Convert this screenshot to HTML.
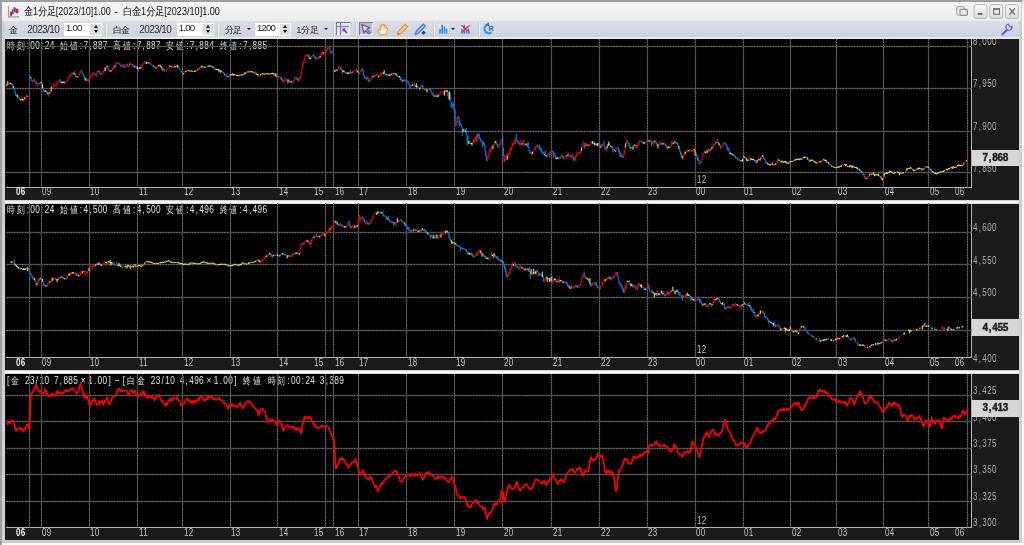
<!DOCTYPE html>
<html><head><meta charset="utf-8"><title>chart</title>
<style>
html,body{margin:0;padding:0;overflow:hidden}
body{width:1024px;height:545px;position:relative;overflow:hidden;background:#fff;font-family:"Liberation Sans",sans-serif}
.abs,.pan,.plot,.ax,.pb,.tl,.hd,.yl,#fr *,#tb *{position:absolute}
#fr{position:absolute;left:0;top:0;width:1024px;height:545px;background:#cfcfcf}
.pan{left:5px;width:1013.5px;background:#1b1b1b}
.plot{left:6px;width:965px;background:#000;border-right:1px solid #b4b4b4;border-bottom:1px solid #b4b4b4;box-sizing:content-box}
.ax{left:972px;width:46.5px;overflow:hidden}
.yl,.tl,.hd{font-family:"Liberation Sans",sans-serif;font-size:10px;line-height:10px;color:#b4b4b4;white-space:nowrap;transform-origin:0 0;transform:scaleX(.8);letter-spacing:.5px;filter:grayscale(1)}
.hd{font-size:10.6px;line-height:11px;transform:scaleX(.778);letter-spacing:.45px}
u{display:inline-block;width:.556em;text-align:center;text-decoration:none}
.yl{left:.6px}
.tl{color:#c2c2c2}
.tl.bd{font-weight:bold;color:#ececec}
.hd{left:6px;color:#e2e2e2}
.yl{color:#aaa}
.k{display:inline-block;font-weight:normal;text-align:center;overflow:hidden;vertical-align:top;height:10px;font-size:9.5px;letter-spacing:0}
.hd .k{width:12.23px;height:11px;font-size:10.4px;margin-right:.45px}
.pb{left:972px;width:46.5px;background:#d6d6d6;color:#1c1c1c;font-family:"Liberation Sans",sans-serif;font-weight:bold;font-size:10px;text-align:center;letter-spacing:-.3px;filter:grayscale(1);-webkit-text-stroke:.4px #1c1c1c}
.pb u{width:.45em}
svg{position:absolute;left:0;top:0}
#tb{position:absolute;left:0;top:0;width:1024px;height:40px}
.tt{filter:grayscale(1);font-size:10.5px;line-height:12px;color:#111;white-space:nowrap;transform-origin:0 0;transform:scaleX(.85)}
.tt .k{position:static!important;height:12px;font-size:10.5px}
.tc{filter:grayscale(1);font-size:9.4px;line-height:10px;height:10px;color:#1a1a1a;white-space:nowrap;overflow:hidden;text-align:center;letter-spacing:-.2px}
.tn{font-size:10px;line-height:10px;color:#2a2d36;white-space:nowrap;letter-spacing:-.62px;filter:grayscale(1)}
.spin{height:13.6px;background:#fff}
.spin i{left:2px;top:.5px;font-style:normal;font-size:9.6px;line-height:10px;color:#222;letter-spacing:-.8px;filter:grayscale(1)}
.spin s{right:.5px;top:1.2px;width:10.6px;height:11.4px;background:#dcdee3;text-decoration:none}
.spin s:before,.spin s:after{content:"";position:absolute;left:3.1px;border:2.3px solid transparent}
.spin s:before{top:-.4px;border-bottom:3px solid #111}
.spin s:after{top:6.6px;border-top:3px solid #111}
.sep{top:22.5px;width:1px;height:13px;background:#f1f2f5;box-shadow:-1px 0 0 #c3c7d0}
.dd{width:0;height:0;border:2.1px solid transparent;border-top:2.6px solid #111}

.g0{stroke:#3e3e3e;stroke-width:1.3;fill:none}
.g{stroke:#6a6a6a;stroke-width:1;stroke-dasharray:1.3 1.4;fill:none}
.cr{stroke:#e80000;stroke-width:1.1;fill:none}
.cb{stroke:#0a7ae6;stroke-width:1.1;fill:none}
.cy{stroke:#e6d85a;stroke-width:1.1;fill:none}
.sp{stroke:#f00;stroke-width:1.7;fill:none;stroke-linejoin:miter;stroke-miterlimit:3}
</style></head><body>
<div id="fr">
 <div style="left:0;top:0;width:1024px;height:2px;background:#9e9ea0"></div>
 <div style="left:0;top:0;width:2px;height:545px;background:#9e9ea0"></div>
 <div style="left:2px;top:2px;width:1019px;height:18.5px;background:linear-gradient(#f4f4f4,#ececec)"></div>
 <div style="left:1021.5px;top:0;width:2.5px;height:545px;background:linear-gradient(#d8d8d8,#fafafa 6px)"></div>
 <div style="left:2px;top:543px;width:1022px;height:2px;background:#fafafa"></div>
 <div style="left:5px;top:20.5px;width:1013.5px;height:16px;background:linear-gradient(#dadee7,#cdd2dd)"></div>
 <div style="left:5px;top:36.5px;width:1013.5px;height:2.5px;background:#e9e9ea"></div>
 <div style="left:5px;top:199.5px;width:1013.5px;height:4px;background:linear-gradient(#bdbdbd,#fff 45%,#fff 60%,#c9c9c9)"></div>
 <div style="left:5px;top:370px;width:1013.5px;height:4px;background:linear-gradient(#bdbdbd,#fff 45%,#fff 60%,#c9c9c9)"></div>
</div>
<div class="pan" style="top:39px;height:160.5px"></div>
<div class="plot" style="top:39px;height:147.5px"></div>
<div class="pan" style="top:203.5px;height:166.5px"></div>
<div class="plot" style="top:203.5px;height:153.5px"></div>
<div class="pan" style="top:374px;height:166px"></div>
<div class="plot" style="top:374px;height:153.2px"></div>
<div class="ax" style="top:39px;height:160.5px">
<span class="yl" style="top:-2.2px">8<u>,</u>000</span>
<span class="yl" style="top:40.3px">7<u>,</u>950</span>
<span class="yl" style="top:82.7px">7<u>,</u>900</span>
<span class="yl" style="top:124.5px">7<u>,</u>850</span>
</div>
<div class="pb" style="top:150.4px;height:15.9px;line-height:15.9px">7<u>,</u>868</div>
<span class="tl bd" style="left:16.2px;top:187.1px">06</span>
<span class="tl" style="left:41.9px;top:187.1px">09</span>
<span class="tl" style="left:90.3px;top:187.1px">10</span>
<span class="tl" style="left:138.8px;top:187.1px">11</span>
<span class="tl" style="left:183.8px;top:187.1px">12</span>
<span class="tl" style="left:231.3px;top:187.1px">13</span>
<span class="tl" style="left:278.5px;top:187.1px">14</span>
<span class="tl" style="left:314.1px;top:187.1px">15</span>
<span class="tl" style="left:335.3px;top:187.1px">16</span>
<span class="tl" style="left:359.4px;top:187.1px">17</span>
<span class="tl" style="left:408px;top:187.1px">18</span>
<span class="tl" style="left:455.8px;top:187.1px">19</span>
<span class="tl" style="left:503.6px;top:187.1px">20</span>
<span class="tl" style="left:552.5px;top:187.1px">21</span>
<span class="tl" style="left:600.6px;top:187.1px">22</span>
<span class="tl" style="left:648.4px;top:187.1px">23</span>
<span class="tl" style="left:696.3px;top:187.1px">00</span>
<span class="tl" style="left:744.3px;top:187.1px">01</span>
<span class="tl" style="left:792.1px;top:187.1px">02</span>
<span class="tl" style="left:837.7px;top:187.1px">03</span>
<span class="tl" style="left:884.7px;top:187.1px">04</span>
<span class="tl" style="left:929.8px;top:187.1px">05</span>
<span class="tl" style="left:954.7px;top:187.1px">06</span>
<span class="tl" style="left:696.6px;top:174.9px">12</span>
<div class="hd" style="top:39.9px"><b class="k">時</b><b class="k">刻</b><u>:</u>00<u>:</u>24<u>&nbsp;</u><b class="k">始</b><b class="k">値</b><u>:</u>7<u>,</u>887<u>&nbsp;</u><b class="k">高</b><b class="k">値</b><u>:</u>7<u>,</u>887<u>&nbsp;</u><b class="k">安</b><b class="k">値</b><u>:</u>7<u>,</u>884<u>&nbsp;</u><b class="k">終</b><b class="k">値</b><u>:</u>7<u>,</u>885</div>
<div class="ax" style="top:203.5px;height:166.5px">
<span class="yl" style="top:19.4px">4<u>,</u>600</span>
<span class="yl" style="top:52px">4<u>,</u>550</span>
<span class="yl" style="top:84.8px">4<u>,</u>500</span>
<span class="yl" style="top:150.3px">4<u>,</u>400</span>
</div>
<div class="pb" style="top:319.3px;height:17px;line-height:17px">4<u>,</u>455</div>
<span class="tl bd" style="left:16.2px;top:357.6px">06</span>
<span class="tl" style="left:41.9px;top:357.6px">09</span>
<span class="tl" style="left:90.3px;top:357.6px">10</span>
<span class="tl" style="left:138.8px;top:357.6px">11</span>
<span class="tl" style="left:183.8px;top:357.6px">12</span>
<span class="tl" style="left:231.3px;top:357.6px">13</span>
<span class="tl" style="left:278.5px;top:357.6px">14</span>
<span class="tl" style="left:314.1px;top:357.6px">15</span>
<span class="tl" style="left:335.3px;top:357.6px">16</span>
<span class="tl" style="left:359.4px;top:357.6px">17</span>
<span class="tl" style="left:408px;top:357.6px">18</span>
<span class="tl" style="left:455.8px;top:357.6px">19</span>
<span class="tl" style="left:503.6px;top:357.6px">20</span>
<span class="tl" style="left:552.5px;top:357.6px">21</span>
<span class="tl" style="left:600.6px;top:357.6px">22</span>
<span class="tl" style="left:648.4px;top:357.6px">23</span>
<span class="tl" style="left:696.3px;top:357.6px">00</span>
<span class="tl" style="left:744.3px;top:357.6px">01</span>
<span class="tl" style="left:792.1px;top:357.6px">02</span>
<span class="tl" style="left:837.7px;top:357.6px">03</span>
<span class="tl" style="left:884.7px;top:357.6px">04</span>
<span class="tl" style="left:929.8px;top:357.6px">05</span>
<span class="tl" style="left:954.7px;top:357.6px">06</span>
<span class="tl" style="left:696.6px;top:345.4px">12</span>
<div class="hd" style="top:204.4px"><b class="k">時</b><b class="k">刻</b><u>:</u>00<u>:</u>24<u>&nbsp;</u><b class="k">始</b><b class="k">値</b><u>:</u>4<u>,</u>500<u>&nbsp;</u><b class="k">高</b><b class="k">値</b><u>:</u>4<u>,</u>500<u>&nbsp;</u><b class="k">安</b><b class="k">値</b><u>:</u>4<u>,</u>496<u>&nbsp;</u><b class="k">終</b><b class="k">値</b><u>:</u>4<u>,</u>496</div>
<div class="ax" style="top:374px;height:166px">
<span class="yl" style="top:12.3px">3<u>,</u>425</span>
<span class="yl" style="top:38.5px">3<u>,</u>400</span>
<span class="yl" style="top:64.9px">3<u>,</u>375</span>
<span class="yl" style="top:91.3px">3<u>,</u>350</span>
<span class="yl" style="top:117.8px">3<u>,</u>325</span>
<span class="yl" style="top:144px">3<u>,</u>300</span>
</div>
<div class="pb" style="top:400.2px;height:16.8px;line-height:16.8px">3<u>,</u>413</div>
<span class="tl bd" style="left:16.2px;top:527.8px">06</span>
<span class="tl" style="left:41.9px;top:527.8px">09</span>
<span class="tl" style="left:90.3px;top:527.8px">10</span>
<span class="tl" style="left:138.8px;top:527.8px">11</span>
<span class="tl" style="left:183.8px;top:527.8px">12</span>
<span class="tl" style="left:231.3px;top:527.8px">13</span>
<span class="tl" style="left:278.5px;top:527.8px">14</span>
<span class="tl" style="left:314.1px;top:527.8px">15</span>
<span class="tl" style="left:335.3px;top:527.8px">16</span>
<span class="tl" style="left:359.4px;top:527.8px">17</span>
<span class="tl" style="left:408px;top:527.8px">18</span>
<span class="tl" style="left:455.8px;top:527.8px">19</span>
<span class="tl" style="left:503.6px;top:527.8px">20</span>
<span class="tl" style="left:552.5px;top:527.8px">21</span>
<span class="tl" style="left:600.6px;top:527.8px">22</span>
<span class="tl" style="left:648.4px;top:527.8px">23</span>
<span class="tl" style="left:696.3px;top:527.8px">00</span>
<span class="tl" style="left:744.3px;top:527.8px">01</span>
<span class="tl" style="left:792.1px;top:527.8px">02</span>
<span class="tl" style="left:837.7px;top:527.8px">03</span>
<span class="tl" style="left:884.7px;top:527.8px">04</span>
<span class="tl" style="left:929.8px;top:527.8px">05</span>
<span class="tl" style="left:954.7px;top:527.8px">06</span>
<span class="tl" style="left:696.6px;top:515.6px">12</span>
<div class="hd" style="top:374.9px"><u>[</u><b class="k">金</b><u>&nbsp;</u>23<u>/</u>10<u>&nbsp;</u>7<u>,</u>885<b class="k">×</b>1<u>.</u>00<u>]</u><b class="k">−</b><u>[</u><b class="k">白</b><b class="k">金</b><u>&nbsp;</u>23<u>/</u>10<u>&nbsp;</u>4<u>,</u>496<b class="k">×</b>1<u>.</u>00<u>]</u><u>&nbsp;</u><b class="k">終</b><b class="k">値</b><u>&nbsp;</u><b class="k">時</b><b class="k">刻</b><u>:</u>00<u>:</u>24<u>&nbsp;</u>3<u>,</u>389</div>
<svg width="1024" height="545" viewBox="0 0 1024 545">
<path class="g0" d="M6 46.5H971.5"/><path class="g" d="M6 46.5H971.5"/>
<path class="g0" d="M6 88.5H971.5"/><path class="g" d="M6 88.5H971.5"/>
<path class="g0" d="M6 131.5H971.5"/><path class="g" d="M6 131.5H971.5"/>
<path class="g0" d="M6 172.5H971.5"/><path class="g" d="M6 172.5H971.5"/>
<path class="g0" d="M29.5 39V186.5"/><path class="g" d="M29.5 39V186.5"/>
<path class="g0" d="M41.5 39V186.5"/><path class="g" d="M41.5 39V186.5"/>
<path class="g0" d="M89.5 39V186.5"/><path class="g" d="M89.5 39V186.5"/>
<path class="g0" d="M137.5 39V186.5"/><path class="g" d="M137.5 39V186.5"/>
<path class="g0" d="M182.5 39V186.5"/><path class="g" d="M182.5 39V186.5"/>
<path class="g0" d="M230.5 39V186.5"/><path class="g" d="M230.5 39V186.5"/>
<path class="g0" d="M277.5 39V186.5"/><path class="g" d="M277.5 39V186.5"/>
<path class="g0" d="M325.5 39V186.5"/><path class="g" d="M325.5 39V186.5"/>
<path class="g0" d="M333.5 39V186.5"/><path class="g" d="M333.5 39V186.5"/>
<path class="g0" d="M358.5 39V186.5"/><path class="g" d="M358.5 39V186.5"/>
<path class="g0" d="M406.5 39V186.5"/><path class="g" d="M406.5 39V186.5"/>
<path class="g0" d="M454.5 39V186.5"/><path class="g" d="M454.5 39V186.5"/>
<path class="g0" d="M502.5 39V186.5"/><path class="g" d="M502.5 39V186.5"/>
<path class="g0" d="M551.5 39V186.5"/><path class="g" d="M551.5 39V186.5"/>
<path class="g0" d="M599.5 39V186.5"/><path class="g" d="M599.5 39V186.5"/>
<path class="g0" d="M647.5 39V186.5"/><path class="g" d="M647.5 39V186.5"/>
<path class="g0" d="M695.5 39V186.5"/><path class="g" d="M695.5 39V186.5"/>
<path class="g0" d="M743.5 39V186.5"/><path class="g" d="M743.5 39V186.5"/>
<path class="g0" d="M790.5 39V186.5"/><path class="g" d="M790.5 39V186.5"/>
<path class="g0" d="M836.5 39V186.5"/><path class="g" d="M836.5 39V186.5"/>
<path class="g0" d="M883.5 39V186.5"/><path class="g" d="M883.5 39V186.5"/>
<path class="g0" d="M928.5 39V186.5"/><path class="g" d="M928.5 39V186.5"/>
<path class="g0" d="M967.5 39V186.5"/><path class="g" d="M967.5 39V186.5"/>
<path class="g0" d="M6 232.5H971.5"/><path class="g" d="M6 232.5H971.5"/>
<path class="g0" d="M6 264.5H971.5"/><path class="g" d="M6 264.5H971.5"/>
<path class="g0" d="M6 297.5H971.5"/><path class="g" d="M6 297.5H971.5"/>
<path class="g0" d="M6 330.5H971.5"/><path class="g" d="M6 330.5H971.5"/>
<path class="g0" d="M29.5 203.5V357"/><path class="g" d="M29.5 203.5V357"/>
<path class="g0" d="M41.5 203.5V357"/><path class="g" d="M41.5 203.5V357"/>
<path class="g0" d="M89.5 203.5V357"/><path class="g" d="M89.5 203.5V357"/>
<path class="g0" d="M137.5 203.5V357"/><path class="g" d="M137.5 203.5V357"/>
<path class="g0" d="M182.5 203.5V357"/><path class="g" d="M182.5 203.5V357"/>
<path class="g0" d="M230.5 203.5V357"/><path class="g" d="M230.5 203.5V357"/>
<path class="g0" d="M277.5 203.5V357"/><path class="g" d="M277.5 203.5V357"/>
<path class="g0" d="M325.5 203.5V357"/><path class="g" d="M325.5 203.5V357"/>
<path class="g0" d="M333.5 203.5V357"/><path class="g" d="M333.5 203.5V357"/>
<path class="g0" d="M358.5 203.5V357"/><path class="g" d="M358.5 203.5V357"/>
<path class="g0" d="M406.5 203.5V357"/><path class="g" d="M406.5 203.5V357"/>
<path class="g0" d="M454.5 203.5V357"/><path class="g" d="M454.5 203.5V357"/>
<path class="g0" d="M502.5 203.5V357"/><path class="g" d="M502.5 203.5V357"/>
<path class="g0" d="M551.5 203.5V357"/><path class="g" d="M551.5 203.5V357"/>
<path class="g0" d="M599.5 203.5V357"/><path class="g" d="M599.5 203.5V357"/>
<path class="g0" d="M647.5 203.5V357"/><path class="g" d="M647.5 203.5V357"/>
<path class="g0" d="M695.5 203.5V357"/><path class="g" d="M695.5 203.5V357"/>
<path class="g0" d="M743.5 203.5V357"/><path class="g" d="M743.5 203.5V357"/>
<path class="g0" d="M790.5 203.5V357"/><path class="g" d="M790.5 203.5V357"/>
<path class="g0" d="M836.5 203.5V357"/><path class="g" d="M836.5 203.5V357"/>
<path class="g0" d="M883.5 203.5V357"/><path class="g" d="M883.5 203.5V357"/>
<path class="g0" d="M928.5 203.5V357"/><path class="g" d="M928.5 203.5V357"/>
<path class="g0" d="M967.5 203.5V357"/><path class="g" d="M967.5 203.5V357"/>
<path class="g0" d="M6 395.5H971.5"/><path class="g" d="M6 395.5H971.5"/>
<path class="g0" d="M6 421.5H971.5"/><path class="g" d="M6 421.5H971.5"/>
<path class="g0" d="M6 448.5H971.5"/><path class="g" d="M6 448.5H971.5"/>
<path class="g0" d="M6 474.5H971.5"/><path class="g" d="M6 474.5H971.5"/>
<path class="g0" d="M6 501.5H971.5"/><path class="g" d="M6 501.5H971.5"/>
<path class="g0" d="M29.5 374V527.2"/><path class="g" d="M29.5 374V527.2"/>
<path class="g0" d="M41.5 374V527.2"/><path class="g" d="M41.5 374V527.2"/>
<path class="g0" d="M89.5 374V527.2"/><path class="g" d="M89.5 374V527.2"/>
<path class="g0" d="M137.5 374V527.2"/><path class="g" d="M137.5 374V527.2"/>
<path class="g0" d="M182.5 374V527.2"/><path class="g" d="M182.5 374V527.2"/>
<path class="g0" d="M230.5 374V527.2"/><path class="g" d="M230.5 374V527.2"/>
<path class="g0" d="M277.5 374V527.2"/><path class="g" d="M277.5 374V527.2"/>
<path class="g0" d="M325.5 374V527.2"/><path class="g" d="M325.5 374V527.2"/>
<path class="g0" d="M333.5 374V527.2"/><path class="g" d="M333.5 374V527.2"/>
<path class="g0" d="M358.5 374V527.2"/><path class="g" d="M358.5 374V527.2"/>
<path class="g0" d="M406.5 374V527.2"/><path class="g" d="M406.5 374V527.2"/>
<path class="g0" d="M454.5 374V527.2"/><path class="g" d="M454.5 374V527.2"/>
<path class="g0" d="M502.5 374V527.2"/><path class="g" d="M502.5 374V527.2"/>
<path class="g0" d="M551.5 374V527.2"/><path class="g" d="M551.5 374V527.2"/>
<path class="g0" d="M599.5 374V527.2"/><path class="g" d="M599.5 374V527.2"/>
<path class="g0" d="M647.5 374V527.2"/><path class="g" d="M647.5 374V527.2"/>
<path class="g0" d="M695.5 374V527.2"/><path class="g" d="M695.5 374V527.2"/>
<path class="g0" d="M743.5 374V527.2"/><path class="g" d="M743.5 374V527.2"/>
<path class="g0" d="M790.5 374V527.2"/><path class="g" d="M790.5 374V527.2"/>
<path class="g0" d="M836.5 374V527.2"/><path class="g" d="M836.5 374V527.2"/>
<path class="g0" d="M883.5 374V527.2"/><path class="g" d="M883.5 374V527.2"/>
<path class="g0" d="M928.5 374V527.2"/><path class="g" d="M928.5 374V527.2"/>
<path class="g0" d="M967.5 374V527.2"/><path class="g" d="M967.5 374V527.2"/>
<path class="cb" d="M11.7 82.7V85.1M12.5 84.0V86.5M14.1 87.8V90.5M14.9 89.6V93.5M15.7 92.2V95.9M16.5 94.4V96.3M18.2 96.1V97.5M19.0 97.4V99.6M19.8 98.4V100.2M29.6 75.6V77.0M30.4 76.2V78.5M31.2 77.0V80.8M32.0 80.1V81.5M32.8 80.6V82.0M34.4 78.7V81.4M36.0 81.0V83.9M36.8 82.3V84.5M39.3 82.9V84.4M41.7 81.7V85.0M43.3 87.5V92.3M46.5 90.9V93.1M47.3 91.8V94.8M60.2 78.9V83.0M61.0 80.4V83.2M65.0 82.0V83.5M73.1 72.4V74.1M74.7 71.2V74.9M75.5 73.8V76.5M76.3 75.4V77.2M81.9 70.0V73.4M82.7 72.7V74.4M83.5 74.3V76.5M84.3 75.5V80.5M85.1 77.6V80.6M87.6 79.2V81.1M94.0 72.8V74.6M95.6 73.7V75.7M98.0 70.7V72.1M98.8 70.6V72.0M99.6 70.9V73.8M100.4 73.1V74.5M101.2 73.4V74.8M107.7 66.3V68.2M108.5 67.4V69.6M109.3 69.3V71.9M117.3 62.4V63.8M119.0 62.4V64.2M119.8 63.7V65.1M120.6 64.7V66.4M121.4 65.1V66.5M122.2 65.8V67.2M123.8 63.9V67.8M127.0 63.7V65.5M127.8 64.5V66.8M131.8 63.7V65.1M132.6 64.6V66.2M133.4 65.7V67.2M135.1 66.0V67.4M135.9 66.3V67.7M136.7 66.3V68.9M138.3 67.9V71.3M145.5 61.6V62.7M149.5 62.3V63.8M150.3 63.2V64.6M151.2 63.9V65.3M152.8 64.8V66.4M154.4 66.3V68.2M155.2 67.2V68.3M162.4 67.9V70.9M164.0 69.3V71.1M164.8 70.5V71.7M172.1 66.3V68.0M178.5 66.5V68.0M179.3 67.5V68.6M180.1 68.2V69.8M180.9 69.5V71.5M181.7 70.9V72.7M182.5 72.5V74.3M189.0 70.2V71.4M202.7 65.7V67.1M203.5 66.3V67.4M205.9 66.6V67.7M206.7 66.4V67.5M213.9 66.8V68.7M214.7 68.2V69.8M219.6 69.5V71.2M222.0 71.0V72.5M222.8 71.6V72.8M223.6 72.1V73.6M224.4 73.0V76.0M225.2 73.5V74.6M226.0 73.7V76.0M226.8 75.3V76.8M228.4 76.1V77.4M246.1 72.3V73.4M253.4 71.8V72.9M255.8 71.2V74.4M259.0 75.2V76.8M274.3 73.5V74.8M277.5 76.0V77.7M279.1 76.2V77.6M280.0 76.1V77.5M280.8 76.9V78.9M281.6 77.5V80.2M282.4 79.0V81.2M283.2 80.4V82.5M287.2 78.9V80.6M288.8 78.8V81.3M289.6 80.5V81.9M290.4 81.1V82.6M296.1 76.9V78.3M296.9 77.2V80.2M297.7 78.4V80.5M298.5 78.8V81.4M307.3 54.4V55.9M308.1 55.5V57.3M308.9 54.2V58.6M313.0 54.8V56.8M313.8 54.1V56.5M314.6 56.3V57.7M315.4 56.7V59.6M316.2 57.2V58.6M317.0 58.0V59.4M329.1 46.7V48.2M329.9 47.9V51.3M330.7 50.7V53.1M331.5 52.1V53.5M333.1 49.6V53.8M334.3 70.6V72.0M340.0 66.3V68.3M340.8 67.6V69.9M341.6 69.1V70.5M342.4 69.6V73.9M344.8 71.4V72.8M345.6 72.1V73.5M350.4 70.3V73.8M356.1 69.2V70.8M356.9 69.3V72.4M358.5 72.0V73.5M362.5 68.4V71.0M363.3 70.0V75.5M364.1 74.5V77.7M364.9 76.3V78.6M365.7 77.4V79.3M367.3 76.7V78.6M368.1 77.3V81.6M369.0 79.8V82.2M374.6 75.1V76.6M376.2 74.0V75.4M377.8 74.7V76.4M382.6 72.5V73.9M385.1 73.0V74.5M386.7 73.7V75.6M387.5 74.3V75.7M388.3 74.0V75.8M395.5 73.1V74.8M397.1 74.3V76.0M397.9 75.3V77.3M398.7 75.9V77.4M400.3 76.7V80.6M401.2 78.1V80.2M402.0 79.4V82.4M404.4 79.2V80.9M405.2 79.8V81.2M406.0 79.5V81.6M406.8 80.3V81.7M407.6 81.3V82.8M408.4 81.4V83.3M409.2 82.8V85.5M410.0 84.7V88.1M410.8 85.3V86.7M414.0 83.5V85.5M414.8 84.4V85.8M415.6 84.8V87.2M417.3 85.2V88.5M418.9 87.1V88.8M422.1 84.9V87.0M422.9 85.4V89.1M423.7 88.2V89.6M424.5 88.7V90.1M425.3 89.1V90.5M429.3 88.5V90.0M430.1 88.8V90.5M430.9 89.6V92.3M431.7 91.5V93.9M432.5 92.7V95.3M433.4 94.0V95.8M434.2 95.0V96.4M435.8 94.7V96.7M447.8 90.3V96.8M448.6 92.1V99.7M450.3 93.4V101.5M451.1 100.8V108.0M451.9 102.8V105.2M452.7 104.6V107.6M453.5 102.3V108.9M454.3 108.0V110.7M455.1 109.5V118.7M455.9 117.2V126.3M458.3 116.2V117.6M459.1 117.1V126.5M459.9 120.6V124.7M460.7 123.0V125.1M461.5 124.5V127.3M462.3 126.6V135.9M463.9 128.6V130.5M464.7 129.3V132.6M466.4 128.2V135.2M467.2 134.5V145.7M468.0 135.9V142.0M469.6 141.3V143.2M470.4 142.9V144.3M473.6 139.3V142.4M477.6 133.5V139.7M478.4 134.5V136.5M479.2 133.3V138.5M480.0 137.4V140.1M480.8 138.6V141.4M481.7 140.4V142.6M482.5 141.2V147.1M483.3 141.5V144.5M484.1 142.7V146.1M484.9 144.6V150.7M485.7 150.3V156.7M486.5 155.4V160.9M496.1 140.9V143.1M496.9 142.5V145.3M497.8 143.7V147.5M498.6 146.1V147.6M501.8 139.4V141.2M502.6 135.7V149.0M503.4 147.6V156.1M504.2 155.2V161.9M516.3 134.3V140.0M517.1 139.2V141.8M517.9 140.4V142.5M518.7 140.9V143.8M519.5 142.4V145.2M524.3 143.6V145.7M526.7 144.0V146.0M527.5 142.7V146.7M528.3 141.8V148.1M529.1 146.8V151.1M530.0 150.4V153.2M530.8 152.1V154.3M537.2 144.8V147.5M538.0 146.3V147.7M538.8 147.4V148.8M539.6 144.7V149.0M540.4 147.8V150.2M541.2 148.0V151.5M542.0 150.1V153.5M542.8 151.5V153.6M543.6 152.4V154.2M545.2 150.3V156.6M546.9 155.0V157.1M549.3 152.7V156.7M551.7 150.6V152.5M553.3 150.9V156.9M554.1 152.8V154.2M554.9 153.6V156.5M555.7 155.4V158.9M558.1 157.5V158.9M558.9 157.7V159.6M560.5 157.1V158.5M562.2 154.8V157.2M563.0 156.0V158.0M563.8 157.5V158.9M568.6 152.7V156.2M571.8 154.1V156.6M572.6 156.0V157.4M573.4 156.9V161.3M574.2 158.8V160.2M579.9 151.9V153.6M584.7 143.0V148.4M585.5 142.2V146.6M588.7 144.0V146.1M593.5 142.0V144.1M595.2 143.5V145.3M596.8 143.6V145.2M598.4 143.3V144.7M599.2 141.6V145.5M600.0 143.8V147.1M604.0 141.1V146.8M604.8 145.4V149.6M605.6 148.1V149.5M609.6 143.3V145.6M610.5 145.2V147.1M612.1 146.1V148.5M612.9 147.6V152.4M613.7 149.0V150.4M614.5 149.1V151.1M617.7 147.4V148.8M618.5 147.2V151.5M619.3 150.6V153.5M620.1 151.8V157.3M620.9 152.9V156.7M621.7 155.2V156.6M622.5 155.5V158.3M627.4 140.6V142.6M628.2 142.3V143.8M629.0 142.8V146.2M629.8 144.7V147.8M632.2 147.7V149.3M635.4 145.1V146.5M636.2 145.1V148.2M641.0 140.8V142.5M641.8 140.5V142.5M642.7 141.8V143.2M647.5 140.8V142.2M649.9 139.9V141.8M651.5 140.6V145.9M652.3 141.9V143.8M653.1 140.2V143.8M656.3 141.6V144.3M657.1 142.9V145.9M658.8 144.4V145.8M661.2 143.0V144.9M662.0 142.7V144.5M663.6 143.1V144.5M665.2 143.2V145.5M666.0 144.4V146.7M666.8 145.4V148.6M675.7 141.9V143.4M676.5 142.4V144.0M677.3 142.3V144.7M678.1 143.2V147.1M679.7 148.0V151.8M680.5 151.3V154.9M681.3 153.0V156.9M682.9 157.0V160.2M690.1 149.9V151.3M691.8 149.3V151.3M695.8 151.8V154.7M696.6 153.8V157.0M697.4 156.4V160.6M698.2 157.4V161.1M699.0 160.1V164.3M700.6 161.8V163.2M708.7 148.6V151.9M714.3 143.7V145.1M718.3 141.5V144.3M719.9 144.5V145.9M720.7 145.4V148.4M724.8 142.3V144.6M725.6 143.2V144.6M726.4 144.2V146.4M727.2 145.4V150.4M728.0 147.5V149.5M728.8 148.4V151.6M729.6 151.2V154.8M732.0 153.0V154.6M733.6 153.9V156.2M735.2 155.1V157.9M736.0 156.8V158.3M736.8 157.7V159.1M737.6 158.1V160.0M738.4 159.1V160.5M739.3 159.7V161.2M741.7 160.2V161.6M744.9 156.5V158.1M745.7 157.0V159.5M750.5 157.5V161.0M754.5 160.0V161.5M755.4 159.4V162.6M763.4 155.6V159.1M764.2 158.1V160.0M765.0 158.7V161.0M765.8 160.6V163.8M766.6 161.8V163.2M768.2 163.2V164.6M773.1 163.9V165.3M773.9 164.1V165.7M779.5 160.0V161.7M780.3 160.7V162.4M782.7 161.0V163.6M787.6 162.2V163.8M806.1 156.5V158.0M808.5 159.4V160.8M813.3 160.0V161.6M818.9 161.7V162.8M827.0 161.8V162.9M829.4 162.8V164.9M830.2 164.2V165.3M831.0 164.3V166.2M832.6 166.0V167.1M835.0 166.8V167.9M847.1 164.4V167.1M858.4 168.6V170.0M860.8 170.4V171.8M862.4 171.6V172.8M863.2 172.4V175.0M864.0 174.1V176.8M864.8 176.0V178.4M879.3 175.4V176.8M880.1 175.8V177.5M901.9 172.3V173.7M911.5 167.5V169.4M912.3 168.5V169.7M920.4 167.9V169.0M922.0 168.1V169.4M926.8 165.9V167.5M929.2 167.2V168.7M930.0 168.1V170.0M931.6 169.9V171.8"/>
<path class="cr" d="M8.5 82.9V84.7M9.3 83.2V84.6M21.4 97.7V100.4M23.8 97.2V99.7M25.4 97.1V101.1M26.2 96.0V97.5M27.8 95.5V96.9M33.6 79.3V81.8M35.2 80.4V82.1M37.6 82.9V86.9M38.5 83.2V84.6M40.1 82.1V83.8M44.1 90.9V92.4M48.9 92.7V96.8M50.5 90.1V93.3M52.1 86.0V87.4M52.9 86.0V87.4M53.7 82.5V86.4M54.6 85.0V86.4M55.4 84.2V85.6M56.2 83.8V87.0M57.0 81.8V85.2M57.8 81.1V82.8M58.6 80.3V81.7M59.4 79.1V80.7M65.8 82.4V83.8M66.6 80.7V82.6M67.4 79.4V81.1M68.2 77.2V80.1M69.0 76.0V78.0M69.8 74.8V76.4M70.7 73.8V77.6M71.5 73.1V75.0M72.3 71.9V73.9M77.9 76.2V77.6M78.7 74.5V76.8M79.5 72.5V75.0M80.3 70.7V73.5M81.1 70.0V71.4M86.8 79.7V81.1M88.4 79.3V82.4M89.2 78.2V79.8M90.0 76.9V78.7M90.8 75.4V77.5M91.6 74.9V76.3M92.4 73.5V76.0M93.2 72.3V74.6M94.8 73.5V74.9M96.4 73.2V76.4M97.2 71.3V74.3M102.0 73.3V74.7M102.9 70.4V74.1M103.7 70.4V72.5M104.5 67.8V71.5M106.1 66.4V68.7M110.1 70.3V71.7M111.7 69.6V71.0M112.5 67.8V70.6M113.3 67.1V69.5M114.1 66.7V68.1M115.7 62.2V66.3M116.5 62.4V64.4M118.1 62.5V64.2M123.0 66.0V67.4M124.6 66.0V67.9M125.4 64.7V68.0M126.2 63.9V65.7M128.6 65.8V67.2M129.4 62.5V66.3M130.2 63.6V65.7M131.0 62.9V64.3M139.1 67.8V69.6M141.5 65.7V67.6M142.3 64.4V66.8M143.1 63.5V65.2M143.9 62.4V63.9M144.7 61.2V63.0M152.0 64.7V65.8M156.8 66.0V68.3M157.6 65.8V67.8M159.2 64.4V65.8M165.6 70.5V71.6M166.4 69.9V71.5M167.3 68.4V70.2M168.1 67.6V69.2M168.9 65.5V67.7M172.9 66.3V68.2M173.7 66.5V67.6M176.1 65.6V67.0M184.2 70.7V74.0M185.0 71.2V72.4M186.6 70.6V71.9M187.4 70.2V71.3M193.0 70.8V71.9M193.8 70.9V72.0M196.2 70.2V71.5M197.0 69.4V70.7M198.6 67.0V70.0M199.5 67.8V68.9M200.3 66.8V68.6M207.5 66.0V67.1M211.5 66.1V67.2M229.2 75.3V77.0M235.7 74.8V75.9M238.9 75.2V77.2M240.5 74.5V76.0M243.7 73.4V74.8M246.9 71.8V72.9M249.4 70.0V72.6M251.8 71.0V72.6M255.0 72.4V73.5M259.8 74.7V76.2M261.4 73.8V74.9M265.5 73.5V74.6M276.7 75.5V78.4M278.3 76.0V77.4M284.0 80.8V82.6M284.8 77.4V81.6M285.6 79.6V81.0M286.4 78.5V80.5M292.0 81.2V82.6M292.8 81.4V83.1M293.6 80.0V82.4M294.4 76.4V80.7M295.2 77.3V79.4M299.3 78.0V81.1M300.1 76.1V79.3M300.9 73.1V78.3M301.7 68.3V74.0M302.5 62.3V69.4M303.3 62.0V64.8M304.1 59.2V63.0M304.9 56.3V60.4M305.7 54.3V57.6M306.5 53.9V55.3M311.3 56.0V58.5M312.2 55.2V56.8M317.8 57.6V59.1M318.6 56.8V59.2M319.4 56.3V57.9M321.0 53.8V56.7M321.8 51.7V55.1M322.6 52.7V54.4M324.2 52.2V53.6M325.0 51.8V53.5M325.8 50.7V53.6M326.6 49.2V51.1M327.4 48.3V50.0M328.3 46.4V49.0M332.3 49.7V52.6M335.9 70.2V71.6M337.6 68.7V71.0M338.4 65.8V69.2M339.2 65.7V69.3M346.4 72.7V74.1M349.6 72.5V73.9M351.2 72.7V74.1M352.9 70.9V72.8M353.7 70.2V71.8M354.5 69.9V71.3M355.3 69.2V70.6M359.3 72.2V74.2M360.1 70.6V72.8M360.9 69.3V71.4M361.7 68.2V70.1M366.5 77.1V79.9M369.8 80.5V82.2M370.6 79.1V81.0M371.4 77.6V79.3M372.2 76.1V78.7M373.8 75.8V77.2M375.4 74.8V76.2M377.0 74.1V75.5M379.4 75.1V76.5M380.2 73.1V76.4M381.0 73.3V74.7M381.8 72.6V75.8M390.7 73.8V75.8M392.3 73.1V74.6M393.1 72.5V74.3M394.7 72.8V74.2M403.6 79.5V81.3M411.6 85.0V86.4M413.2 83.0V85.8M418.1 86.9V88.5M420.5 86.3V89.0M421.3 85.2V87.4M426.1 89.0V90.6M427.7 89.0V91.5M428.5 88.3V89.7M436.6 93.7V97.1M439.0 93.7V95.1M439.8 93.1V94.5M440.6 92.2V93.7M441.4 91.9V93.3M442.2 91.7V93.1M443.0 91.0V92.5M443.8 90.7V95.3M445.4 90.5V92.3M456.7 121.1V126.3M457.5 116.1V122.8M472.8 141.5V143.4M474.4 139.6V142.4M475.2 136.9V141.3M476.0 135.5V142.1M476.8 133.5V141.6M487.3 157.5V161.4M488.1 155.3V159.2M488.9 152.9V156.8M489.7 149.0V153.8M490.5 149.7V152.0M491.3 147.4V151.0M492.1 145.7V148.5M493.7 143.9V146.6M494.5 142.6V145.1M499.4 143.6V147.6M500.2 142.6V145.2M501.0 139.0V143.6M505.0 155.4V161.8M505.8 158.5V160.2M506.6 153.6V159.0M508.2 153.5V157.2M509.0 151.7V154.7M509.8 149.6V155.7M510.6 147.7V150.7M511.4 146.4V150.7M512.2 143.0V147.6M513.0 143.0V145.5M513.9 140.9V144.7M514.7 140.1V142.5M515.5 137.6V144.6M520.3 139.7V145.2M521.1 143.9V145.3M522.7 140.2V144.8M523.5 139.7V145.2M525.1 143.2V144.9M531.6 153.0V156.0M533.2 150.6V153.4M534.0 149.3V151.2M534.8 148.1V150.3M535.6 146.4V149.7M536.4 145.2V147.5M547.7 153.4V156.2M548.5 152.8V154.4M550.1 152.1V155.2M550.9 151.0V153.0M552.5 150.5V152.7M559.7 157.1V158.9M561.3 155.0V157.9M564.6 157.0V159.5M565.4 156.3V158.0M566.2 154.9V157.2M567.8 152.5V156.0M569.4 154.9V157.9M570.2 154.2V156.4M571.0 154.9V158.2M575.0 155.6V159.8M575.8 156.0V161.7M576.6 153.8V156.6M577.4 151.9V154.7M578.3 152.9V154.3M579.1 152.6V154.1M580.7 150.3V154.3M582.3 146.2V148.6M583.1 140.7V147.1M583.9 143.2V144.8M586.3 144.6V146.0M587.9 143.5V145.6M589.5 144.1V146.1M590.3 143.5V144.9M591.1 141.8V144.1M591.9 141.0V143.4M601.6 143.9V147.5M602.4 144.3V146.3M603.2 143.1V145.0M606.4 147.8V151.9M616.1 148.6V151.7M616.9 147.4V149.2M623.3 154.2V158.0M624.1 150.5V155.9M624.9 146.8V153.5M626.6 138.8V143.9M631.4 147.2V148.6M633.8 145.2V148.0M637.0 145.3V148.1M637.8 143.4V146.7M638.6 142.4V144.9M639.4 140.7V142.9M640.2 140.4V141.8M645.1 141.9V143.4M645.9 141.1V143.0M646.7 140.6V142.5M648.3 140.6V142.0M650.7 140.6V142.0M653.9 140.7V145.7M655.5 141.0V142.4M659.6 142.2V145.6M660.4 141.3V144.7M664.4 143.1V145.3M670.0 146.4V147.8M670.8 145.7V147.1M671.6 141.0V146.3M672.4 143.3V144.7M674.0 141.6V144.1M683.7 153.9V158.8M684.5 152.2V155.1M686.1 151.1V152.9M686.9 150.4V151.8M687.7 150.1V151.9M689.3 149.7V151.6M691.0 149.6V151.5M692.6 149.9V151.8M693.4 149.5V152.0M699.8 162.4V164.6M701.4 159.6V162.6M702.2 156.2V160.3M703.0 153.3V156.8M703.8 152.6V154.0M704.6 150.6V153.7M706.2 151.4V152.9M707.9 149.8V152.4M709.5 149.8V151.3M711.1 147.9V150.5M712.7 145.8V147.7M713.5 144.1V147.2M715.1 141.8V144.4M715.9 142.0V144.2M717.5 139.6V142.6M721.5 146.5V148.4M722.3 145.3V146.9M723.2 143.5V145.4M724.0 142.0V144.7M734.4 155.4V156.8M740.1 160.2V161.6M743.3 157.9V160.6M748.9 158.7V160.5M749.7 155.8V159.4M756.2 161.0V162.5M757.8 159.9V161.6M759.4 158.8V160.3M761.0 156.8V158.5M761.8 155.6V158.2M771.5 163.7V165.5M774.7 164.1V165.7M776.3 162.4V164.4M777.1 160.9V162.9M777.9 159.3V163.7M789.2 161.9V163.3M793.2 160.4V161.5M802.8 157.7V158.8M809.3 159.6V160.7M817.3 162.3V163.4M818.1 162.0V163.4M821.4 160.5V162.3M822.2 160.3V161.4M823.0 159.8V160.9M837.5 166.9V168.5M842.3 164.6V166.2M843.1 164.7V165.8M843.9 164.1V165.8M848.7 166.1V167.2M865.6 177.6V179.2M867.2 177.6V179.0M868.1 176.1V177.9M868.9 174.2V176.5M870.5 173.5V174.6M872.9 173.4V174.5M883.3 175.0V180.2M893.0 172.5V173.6M896.2 170.8V172.3M897.0 171.0V172.1M904.3 172.0V173.1M905.1 171.1V172.8M905.9 169.4V171.8M915.5 169.4V170.5M917.2 168.0V169.4M924.4 167.4V169.4M925.2 166.9V168.3M945.3 169.4V170.8M950.2 167.7V169.1M956.6 165.7V167.5M963.0 164.1V165.9M964.7 161.9V164.0M965.5 160.8V162.1M967.1 158.9V160.5"/>
<path class="cy" d="M6.9 84.1V86.3M7.7 81.3V84.3M10.1 82.8V84.2M10.9 82.7V84.1M13.3 85.6V88.2M17.3 94.5V97.4M20.6 99.0V100.4M22.2 98.9V100.3M23.0 99.0V100.7M24.6 97.6V99.0M27.0 95.4V96.8M40.9 81.9V83.3M42.5 84.2V88.1M44.9 90.5V91.9M45.7 90.2V91.7M48.1 92.5V94.3M49.7 92.2V93.6M51.3 87.1V91.1M61.8 81.8V83.4M62.6 81.7V83.1M63.4 81.5V83.1M64.2 81.6V83.0M73.9 72.9V74.5M77.1 76.1V77.5M85.9 77.7V80.8M105.3 67.5V71.1M106.9 65.8V67.2M110.9 69.9V71.8M114.9 65.5V67.5M134.2 65.8V67.2M137.5 66.5V68.9M139.9 67.0V68.9M140.7 66.9V68.0M146.3 62.1V64.0M147.1 62.2V63.3M147.9 62.5V63.6M148.7 62.4V63.5M153.6 65.6V66.7M156.0 67.6V68.7M158.4 65.1V66.3M160.0 64.4V66.4M160.8 65.8V66.9M161.6 66.4V68.4M163.2 68.8V69.9M169.7 65.5V66.8M170.5 65.5V66.7M171.3 65.7V66.8M174.5 66.1V67.2M175.3 66.2V67.5M176.9 65.6V66.7M177.7 65.1V67.6M183.4 73.3V74.4M185.8 70.9V72.0M188.2 70.0V71.1M189.8 70.5V71.6M190.6 70.4V71.5M191.4 70.4V71.5M192.2 70.8V71.9M194.6 70.8V71.9M195.4 70.6V71.7M197.8 69.1V70.3M201.1 66.5V67.6M201.9 65.5V67.4M204.3 66.8V67.9M205.1 66.7V67.8M208.3 65.5V66.8M209.1 65.2V66.3M209.9 65.4V66.8M210.7 65.6V66.7M212.3 66.2V67.3M213.1 66.6V67.7M215.6 68.7V69.8M216.4 68.9V70.0M217.2 69.2V70.3M218.0 68.7V69.9M218.8 69.0V71.7M220.4 70.3V72.7M221.2 70.6V71.7M227.6 75.9V77.1M230.0 74.4V75.5M230.8 74.3V75.6M231.7 74.1V75.3M232.5 73.3V74.9M233.3 74.0V75.7M234.1 74.0V75.1M234.9 74.2V75.5M236.5 75.1V76.2M237.3 75.0V76.1M238.1 74.9V76.0M239.7 75.0V76.1M241.3 74.3V75.4M242.1 74.5V75.6M242.9 74.2V75.3M244.5 72.8V74.4M245.3 72.3V73.7M247.8 71.3V72.4M248.6 71.4V72.5M250.2 71.1V72.2M251.0 71.2V72.3M252.6 71.3V72.4M254.2 72.3V73.4M256.6 73.6V74.8M257.4 74.0V75.1M258.2 74.3V75.4M260.6 74.3V75.4M262.2 73.1V74.2M263.0 73.5V74.6M263.9 73.2V74.4M264.7 73.4V74.5M266.3 73.4V74.5M267.1 73.2V74.3M267.9 73.2V74.3M268.7 73.4V74.5M269.5 73.4V74.5M270.3 73.2V74.3M271.1 73.2V74.3M271.9 72.9V74.0M272.7 72.8V73.9M273.5 73.1V74.5M275.1 74.3V75.9M275.9 73.2V76.7M288.0 79.9V83.3M291.2 81.3V82.7M309.7 57.6V59.0M310.5 57.4V58.8M320.2 56.0V57.4M323.4 52.1V53.5M335.1 69.6V72.0M336.8 69.6V71.0M343.2 70.3V72.0M344.0 70.7V72.1M347.2 72.6V74.0M348.0 72.3V73.7M348.8 72.3V73.7M352.0 71.8V73.2M357.7 71.1V72.5M373.0 75.8V77.2M378.6 76.0V77.4M383.4 72.5V73.9M384.2 70.2V73.5M385.9 73.8V75.3M389.1 74.5V75.9M389.9 74.6V76.0M391.5 73.7V75.1M393.9 73.0V74.4M396.3 73.6V75.4M399.5 76.1V77.5M402.8 79.8V81.2M412.4 84.3V85.7M416.4 83.3V87.4M419.7 88.1V89.5M426.9 89.2V92.5M435.0 95.5V97.0M437.4 95.6V97.0M438.2 94.7V96.8M444.6 90.4V95.6M446.2 90.1V91.7M447.0 90.3V91.9M449.5 91.5V99.7M463.1 128.9V131.9M465.6 130.7V132.1M468.8 141.0V144.1M471.2 142.7V144.1M472.0 142.7V145.4M492.9 145.5V148.9M495.3 141.0V143.3M507.4 155.8V159.6M521.9 143.1V144.5M525.9 143.4V145.0M532.4 151.8V154.1M544.4 153.7V155.1M546.1 155.1V156.5M556.5 157.8V159.2M557.3 157.1V158.8M567.0 155.0V156.4M581.5 147.5V151.0M587.1 144.4V145.9M592.7 140.9V143.8M594.4 142.4V145.3M596.0 143.5V145.5M597.6 143.1V146.2M600.8 146.2V147.8M607.2 145.8V148.6M608.0 144.1V146.5M608.8 141.4V145.6M611.3 146.0V147.4M615.3 150.4V151.8M625.7 143.3V147.5M630.6 147.0V148.4M633.0 146.2V149.4M634.6 144.6V146.1M643.5 142.3V143.7M644.3 142.2V143.8M649.1 140.1V141.5M654.7 140.8V142.2M657.9 144.3V148.2M662.8 143.1V144.5M667.6 147.2V148.6M668.4 146.6V148.0M669.2 146.5V147.9M673.2 142.4V144.1M674.9 140.9V142.7M678.9 145.9V149.1M682.1 155.8V158.3M685.3 151.7V153.8M688.5 149.9V151.3M694.2 148.7V150.1M695.0 149.8V155.6M705.4 151.6V153.0M707.1 150.0V152.9M710.3 149.2V150.6M711.9 146.7V149.1M716.7 141.7V143.1M719.1 142.9V145.4M730.4 152.4V154.3M731.2 153.2V154.6M732.8 154.0V155.4M740.9 159.9V161.3M742.5 159.1V161.8M744.1 156.5V158.1M746.5 158.3V160.4M747.3 159.8V161.2M748.1 159.5V160.9M751.3 158.2V159.9M752.1 158.6V160.0M752.9 158.8V160.2M753.7 158.7V160.3M757.0 159.9V162.9M758.6 158.9V160.4M760.2 157.7V160.6M762.6 155.3V156.7M767.4 162.8V164.2M769.0 163.7V165.1M769.8 164.2V165.6M770.6 164.2V165.6M772.3 162.6V164.8M775.5 163.5V164.9M778.7 159.3V160.7M781.1 161.0V162.4M781.9 160.5V161.9M783.5 161.4V162.8M784.3 161.1V162.5M785.1 161.0V162.4M785.9 161.3V162.9M786.7 162.0V163.4M788.4 162.5V163.9M790.0 161.1V162.7M790.8 161.0V162.1M791.6 161.0V162.1M792.4 161.0V162.1M794.0 160.0V161.1M794.8 159.3V160.5M795.6 159.3V160.4M796.4 159.0V160.1M797.2 159.2V160.3M798.0 158.2V159.9M798.8 158.6V159.7M799.6 158.9V160.3M800.4 158.6V159.7M801.2 158.5V159.6M802.0 158.3V159.4M803.7 157.0V158.3M804.5 156.5V157.9M805.3 156.7V157.8M806.9 157.7V158.8M807.7 157.5V159.7M810.1 159.5V161.7M810.9 160.0V161.1M811.7 159.6V160.7M812.5 159.6V160.7M814.1 160.8V162.1M814.9 161.2V162.8M815.7 162.1V163.2M816.5 162.3V163.4M819.8 161.3V162.4M820.6 161.1V162.2M823.8 158.7V160.2M824.6 159.7V160.8M825.4 159.6V160.9M826.2 160.3V162.5M827.8 161.9V163.0M828.6 162.5V163.7M831.8 165.6V166.7M833.4 166.4V167.6M834.2 166.9V168.0M835.9 167.0V168.1M836.7 167.0V168.1M838.3 166.0V167.7M839.1 166.5V167.7M839.9 166.0V167.1M840.7 165.6V166.7M841.5 165.3V166.8M844.7 163.9V165.0M845.5 164.2V166.2M846.3 163.9V165.2M847.9 166.1V167.2M849.5 165.2V167.3M850.3 165.6V166.7M851.1 165.5V166.6M852.0 165.2V168.2M852.8 165.5V167.3M853.6 166.4V167.5M854.4 166.7V167.8M855.2 167.0V168.1M856.0 167.0V168.1M856.8 167.1V168.8M857.6 167.8V169.3M859.2 169.0V170.3M860.0 169.8V170.9M861.6 171.2V172.6M866.4 177.8V178.9M869.7 173.7V175.4M871.3 173.7V174.8M872.1 173.6V174.7M873.7 172.3V174.7M874.5 173.8V176.3M875.3 174.5V175.6M876.1 174.2V175.3M876.9 174.3V175.5M877.7 174.5V175.6M878.5 173.5V176.1M880.9 176.5V178.0M881.7 177.7V179.4M882.5 178.6V180.4M884.2 173.3V176.8M885.0 173.1V174.2M885.8 172.9V174.0M886.6 171.7V173.3M887.4 172.9V174.0M888.2 172.3V173.4M889.0 171.5V173.0M889.8 170.7V172.3M890.6 170.9V172.0M891.4 171.3V172.5M892.2 171.7V173.2M893.8 172.8V174.0M894.6 172.1V173.4M895.4 171.9V173.0M897.8 171.4V173.3M898.6 172.0V173.1M899.4 172.8V175.3M900.3 172.6V173.7M901.1 172.6V173.7M902.7 172.2V173.3M903.5 172.3V173.4M906.7 168.6V170.7M907.5 168.4V169.5M908.3 167.7V169.1M909.1 167.9V169.0M909.9 167.8V168.9M910.7 167.1V168.3M913.1 169.0V170.7M913.9 170.0V171.1M914.7 169.9V171.1M916.4 168.7V169.8M918.0 167.8V169.9M918.8 167.8V168.9M919.6 167.6V168.9M921.2 168.5V170.6M922.8 168.4V169.8M923.6 168.4V169.5M926.0 166.4V167.5M927.6 166.5V167.6M928.4 166.8V167.9M930.8 169.0V170.4M932.5 171.0V172.1M933.3 171.4V172.6M934.1 172.2V173.4M934.9 172.8V173.9M935.7 173.1V174.2M936.5 173.2V174.5M937.3 172.9V174.0M938.1 172.2V173.7M938.9 172.0V173.1M939.7 171.5V172.6M940.5 171.5V172.6M941.3 171.4V172.5M942.1 171.2V172.3M942.9 170.9V172.1M943.7 170.6V172.1M944.5 170.0V171.1M946.1 168.7V169.8M946.9 168.7V170.0M947.7 168.9V170.4M948.6 168.0V169.5M949.4 168.0V169.1M951.0 167.2V168.4M951.8 166.8V168.0M952.6 166.6V168.9M953.4 166.3V167.4M954.2 166.9V168.0M955.0 166.9V168.0M955.8 166.6V167.7M957.4 165.0V166.2M958.2 165.0V166.1M959.0 164.6V166.2M959.8 164.7V166.0M960.6 165.1V166.2M961.4 164.7V165.8M962.2 165.0V166.3M963.8 163.2V164.8M966.3 160.1V161.5"/>
<path class="cb" d="M14.2 259.2V264.5M19.1 266.7V268.8M19.9 267.4V269.1M20.7 267.9V269.6M22.3 268.3V269.7M29.6 272.4V273.8M30.4 272.9V274.7M31.2 274.0V276.3M32.0 275.4V278.0M32.8 276.5V279.0M33.6 278.2V279.6M35.2 279.0V281.8M36.0 281.3V284.8M40.9 277.1V279.8M41.7 278.6V281.5M43.3 280.9V285.2M44.1 283.8V286.3M44.9 285.1V286.5M46.5 285.2V286.6M55.4 277.8V279.2M56.2 278.7V280.1M59.4 277.5V278.9M61.8 276.7V278.1M62.6 276.2V278.2M63.4 277.7V279.1M65.0 277.7V279.4M65.8 278.1V279.5M74.7 272.4V274.4M76.3 272.9V275.1M77.9 274.6V276.1M84.3 270.7V272.1M85.1 270.8V272.8M94.0 265.3V266.7M99.6 262.5V264.3M100.4 263.8V265.6M105.3 261.5V263.2M109.3 260.9V262.7M112.5 262.0V264.0M113.3 262.6V264.7M114.1 263.6V265.2M114.9 264.6V266.0M117.3 263.6V265.0M121.4 265.6V267.4M122.2 266.3V267.7M123.8 266.4V267.8M131.0 265.7V267.5M134.2 265.3V266.7M135.9 265.9V268.4M155.2 263.1V264.2M176.9 261.8V262.9M209.1 262.8V263.9M227.6 264.8V265.9M236.5 264.4V265.5M242.9 262.2V263.3M244.5 263.0V264.1M252.6 261.8V262.9M258.2 259.1V261.3M260.6 261.2V262.6M270.3 253.3V254.7M271.1 253.8V257.2M271.9 254.5V255.9M272.7 254.8V257.7M276.7 254.5V255.9M278.3 254.8V256.2M279.1 255.0V256.4M283.2 253.3V254.9M284.0 253.5V254.9M284.8 252.8V254.7M285.6 253.8V255.4M286.4 254.9V256.3M288.8 255.4V256.8M290.4 255.3V256.7M293.6 253.5V255.1M297.7 252.3V254.5M298.5 252.9V254.3M301.7 244.1V245.5M303.3 243.0V244.7M308.1 240.6V242.2M308.9 241.3V243.4M309.7 243.1V244.5M316.2 233.7V236.4M317.0 235.9V237.4M323.4 233.3V234.7M336.3 220.6V222.5M337.9 223.5V224.9M338.7 223.6V225.6M339.5 224.2V226.0M341.1 223.8V225.6M341.9 225.0V226.4M342.7 225.6V227.0M346.0 226.1V228.3M349.2 220.3V225.9M350.0 224.2V227.7M350.8 226.5V228.4M356.4 225.2V226.6M361.3 217.2V218.6M362.9 216.4V219.8M363.7 218.7V221.4M364.5 219.6V222.2M365.3 221.4V223.2M366.9 220.5V223.8M367.7 222.9V224.3M368.5 222.7V225.0M374.9 212.5V213.9M379.0 211.3V212.7M379.8 212.2V213.7M380.6 212.2V213.6M382.2 212.7V214.1M383.0 210.7V215.9M383.8 214.7V216.4M385.4 215.6V217.0M386.2 216.3V218.8M387.8 217.5V219.6M388.6 215.7V220.3M389.4 219.2V221.5M390.2 220.2V222.8M391.8 221.1V222.9M392.7 221.5V222.9M393.5 221.7V225.9M394.3 221.9V223.5M395.1 222.0V224.2M399.1 219.8V221.2M401.5 219.2V221.6M402.3 220.6V222.4M403.1 221.1V222.5M403.9 222.2V223.7M405.5 224.1V226.2M406.3 224.6V226.8M407.1 225.6V228.6M407.9 227.4V229.7M408.8 226.9V231.2M410.4 230.0V231.4M411.2 229.9V233.1M412.0 229.8V231.2M415.2 228.7V231.0M416.0 229.5V230.9M416.8 229.6V231.0M417.6 230.6V232.0M423.2 229.2V231.1M424.0 229.5V230.9M424.9 229.1V231.4M425.7 229.9V232.8M426.5 231.3V232.8M428.1 233.0V234.4M428.9 233.6V235.0M430.5 234.4V238.0M431.3 235.2V236.9M432.1 235.3V237.6M432.9 236.4V238.8M434.5 236.9V238.5M436.1 234.2V238.6M443.4 231.5V233.0M446.6 230.1V231.9M448.2 231.5V234.0M449.0 233.0V237.6M449.8 236.0V239.9M450.6 239.1V241.1M453.0 242.1V243.8M454.6 242.1V244.3M456.2 243.2V245.7M457.1 244.7V246.1M457.9 245.5V246.9M458.7 245.8V247.2M460.3 246.2V251.4M461.1 247.2V249.1M461.9 247.2V248.8M462.7 247.6V249.4M463.5 247.9V249.3M465.1 248.4V250.5M465.9 249.0V250.4M466.7 249.5V252.0M467.5 251.8V254.1M468.3 252.2V254.1M471.5 252.6V255.3M472.3 253.4V256.5M473.2 255.2V257.3M474.0 256.1V257.5M482.8 253.3V255.4M483.6 254.4V256.2M484.4 255.0V257.0M485.2 255.7V258.2M486.0 256.3V258.7M488.4 257.6V259.7M493.3 254.3V259.1M495.7 255.2V257.5M496.5 255.9V258.1M497.3 256.7V259.1M498.1 257.5V260.2M498.9 259.0V260.8M500.5 259.5V261.7M502.1 260.5V262.6M502.9 261.5V264.5M503.7 261.1V265.8M504.5 264.6V268.9M505.4 267.6V272.2M506.2 270.9V276.7M507.0 273.9V278.1M515.0 261.4V265.5M515.8 264.6V266.5M516.6 265.6V267.2M517.4 266.4V267.9M518.2 267.4V269.2M521.5 267.0V268.6M523.1 267.6V269.0M523.9 268.2V270.1M526.3 268.9V270.3M528.7 268.6V271.9M529.5 267.0V272.3M530.3 271.2V278.1M531.9 272.3V274.9M537.6 269.8V272.1M538.4 271.8V276.0M539.2 272.7V274.9M540.0 273.6V275.1M540.8 274.7V276.3M543.2 275.9V281.5M544.0 279.8V281.2M546.4 275.4V279.1M548.0 277.8V280.4M548.8 278.0V279.4M550.4 278.7V280.6M552.0 275.8V281.6M556.1 279.4V281.5M558.5 279.6V282.8M562.5 280.4V282.8M564.9 281.3V282.7M565.7 281.6V283.3M566.5 282.1V283.7M567.3 282.6V286.5M568.1 284.6V286.6M568.9 285.0V287.9M571.4 285.2V288.9M576.2 284.9V286.4M577.0 285.1V287.8M577.8 285.9V287.9M584.2 271.6V276.2M585.0 275.6V278.2M585.9 277.2V278.7M587.5 278.2V280.3M589.1 279.6V282.5M590.7 283.6V287.3M591.5 283.7V285.7M594.7 282.3V283.9M595.5 283.0V285.1M596.3 281.7V286.3M597.1 285.0V287.9M597.9 286.7V288.1M599.5 286.6V289.4M607.6 277.6V279.4M609.2 276.2V278.4M610.8 276.9V280.8M612.4 277.4V278.8M613.2 276.4V278.3M617.2 271.9V275.9M618.1 275.4V279.1M618.9 278.6V283.4M619.7 282.3V284.6M620.5 283.1V285.3M621.3 283.9V286.6M622.1 284.9V288.9M622.9 287.2V291.8M623.7 288.4V293.3M628.5 280.9V282.6M629.3 280.0V283.3M630.1 283.0V285.2M632.5 284.9V287.5M634.2 285.4V287.0M635.0 285.4V288.0M635.8 287.4V289.2M639.8 283.2V285.6M643.0 286.6V288.2M643.8 287.4V289.6M644.6 288.5V290.1M648.6 284.0V288.5M649.4 287.4V291.6M651.1 290.9V292.3M651.9 289.9V292.9M653.5 292.1V293.5M655.1 292.9V294.6M656.7 293.3V296.0M659.9 293.1V295.0M662.3 291.4V293.6M663.9 291.0V294.6M664.7 294.2V296.4M665.5 294.1V295.9M673.6 289.8V291.8M674.4 290.6V293.6M677.6 289.5V292.2M678.4 291.1V293.8M679.2 292.9V295.6M680.0 291.2V296.0M681.6 295.1V296.8M682.5 295.1V300.1M683.3 295.9V297.6M689.7 294.8V296.4M690.5 296.1V300.4M691.3 296.0V300.2M692.1 297.5V300.1M694.5 299.5V300.9M698.6 298.1V299.7M699.4 298.3V302.6M700.2 299.0V301.8M701.0 300.6V303.6M701.8 302.4V304.8M705.8 304.0V306.6M706.6 305.4V306.8M711.4 304.0V306.4M718.7 298.4V300.1M719.5 299.3V302.1M720.3 300.9V303.3M721.9 303.3V304.7M723.5 303.7V305.1M724.3 303.8V308.4M725.1 307.3V310.1M727.5 306.6V308.0M728.3 306.4V307.8M729.1 306.2V308.0M729.9 307.2V308.8M733.2 303.8V305.5M738.0 304.6V306.6M739.6 304.9V307.4M745.2 302.9V305.1M746.0 303.7V305.2M746.9 304.4V305.8M748.5 302.8V305.8M750.1 304.8V306.8M750.9 305.8V310.7M751.7 307.4V310.7M752.5 310.2V311.6M753.3 309.0V313.0M754.9 312.6V316.6M755.7 316.1V317.6M762.1 310.6V312.6M763.0 311.8V313.5M763.8 311.7V314.5M764.6 313.4V317.1M765.4 316.1V317.8M766.2 316.6V318.0M767.0 317.2V319.5M767.8 318.5V320.8M768.6 319.6V323.2M769.4 320.4V322.1M770.2 321.0V323.2M771.8 321.9V323.7M772.6 323.0V324.4M774.2 321.3V325.5M775.0 323.9V326.7M775.8 325.1V327.2M778.2 324.0V325.4M779.1 325.1V327.7M779.9 326.8V329.3M781.5 328.8V330.2M791.9 329.0V330.8M792.7 330.3V332.4M796.8 330.0V332.2M797.6 331.6V333.0M804.0 326.3V328.3M804.8 327.0V330.0M805.6 329.3V330.8M807.2 330.6V333.2M808.0 332.6V334.0M808.8 332.6V334.7M810.4 334.4V335.8M812.1 335.0V336.9M812.9 335.7V337.5M813.7 336.2V337.6M819.3 337.7V341.7M822.5 339.7V341.1M828.2 338.5V339.9M830.6 338.7V341.2M838.6 337.7V339.1M848.3 335.9V338.3M849.9 338.1V339.5M850.7 339.1V340.5M853.9 336.9V339.4M854.7 337.9V340.6M855.5 339.4V341.8M857.1 341.8V343.2M857.9 342.9V344.7M858.7 344.3V345.7M862.0 344.0V345.4M864.4 344.9V347.6M877.3 342.1V345.9M878.9 343.0V344.4M884.5 339.2V341.0M886.1 339.5V340.9M886.9 339.8V341.8M890.9 338.9V341.0M891.8 340.3V341.7M892.6 340.3V342.8M917.5 328.6V330.9M931.2 326.2V328.2M934.4 327.2V330.1M944.1 327.3V331.1M950.5 328.0V329.9M952.1 328.8V330.9"/>
<path class="cr" d="M12.6 261.3V263.0M13.4 261.9V263.4M26.3 267.6V269.6M37.6 281.0V286.3M38.5 279.1V282.4M39.3 278.6V281.5M47.3 283.6V286.9M48.1 283.0V284.5M48.9 281.1V283.7M50.5 280.6V282.6M51.3 278.1V281.2M53.7 278.9V280.3M54.6 277.9V279.3M58.6 277.3V280.3M60.2 276.4V278.3M66.6 277.2V279.5M67.4 275.5V278.2M68.2 274.2V276.4M70.7 272.3V274.4M71.5 272.6V274.0M73.9 272.3V273.7M75.5 272.4V274.4M79.5 274.7V276.2M80.3 271.6V275.9M81.1 272.9V274.3M81.9 271.1V273.7M83.5 270.8V272.5M85.9 272.1V276.0M86.8 271.4V273.5M87.6 271.0V273.8M88.4 267.3V271.3M90.0 267.3V269.4M90.8 266.6V268.0M91.6 265.9V267.3M92.4 266.2V269.1M93.2 265.4V267.2M94.8 265.3V266.7M96.4 263.4V265.5M98.0 262.4V264.4M102.0 264.7V266.1M102.9 263.0V264.9M103.7 262.4V263.8M104.5 261.3V263.5M107.7 260.9V262.7M115.7 264.6V266.1M116.5 261.3V265.4M123.0 265.9V267.3M124.6 266.2V267.6M126.2 265.4V266.9M129.4 265.6V267.2M132.6 265.3V267.4M136.7 265.4V267.1M143.9 263.7V265.3M145.5 261.8V262.9M159.2 262.6V263.7M174.5 261.9V263.0M196.2 263.1V264.2M216.4 263.8V265.2M247.8 263.5V264.7M251.0 261.9V263.0M256.6 259.8V260.9M257.4 259.2V260.3M261.4 260.5V262.4M262.2 259.1V261.1M263.0 259.1V260.5M263.9 258.7V260.1M264.7 256.5V259.7M265.5 255.7V257.7M267.1 254.7V256.7M267.9 253.6V255.1M268.7 253.2V254.8M274.3 254.4V255.8M275.1 254.7V256.1M275.9 254.4V255.8M280.8 253.6V255.5M281.6 253.2V254.6M289.6 255.6V257.0M291.2 254.9V256.9M292.0 254.0V257.2M292.8 253.8V255.2M294.4 253.3V255.1M295.2 252.4V254.1M296.9 252.6V254.0M300.1 247.7V254.5M300.9 244.2V249.1M302.5 242.5V245.0M304.1 242.8V244.2M304.9 241.2V243.3M305.7 240.7V242.2M306.5 239.9V241.5M310.5 241.8V246.3M311.3 239.9V244.2M312.2 238.7V241.5M313.0 237.2V239.1M314.6 236.4V237.8M315.4 235.4V236.8M317.8 236.3V237.7M318.6 236.2V237.6M320.2 235.0V237.2M321.0 234.8V236.4M321.8 234.0V235.4M322.6 233.2V234.7M324.2 233.2V234.6M325.8 233.2V234.9M326.6 232.6V234.1M327.4 231.2V233.6M328.3 230.1V231.9M329.1 228.6V231.1M330.7 228.4V231.3M331.5 226.0V228.7M332.3 226.6V228.0M333.1 225.3V228.0M333.9 222.2V226.1M334.7 220.5V222.9M340.3 223.0V226.1M343.5 225.9V227.8M346.8 225.2V227.6M347.6 222.8V225.6M348.4 222.2V223.7M351.6 226.0V228.3M352.4 226.2V228.2M353.2 225.8V227.2M354.0 225.3V226.7M355.6 225.5V226.9M358.0 219.8V226.7M358.8 219.3V223.1M359.6 215.0V220.6M360.5 217.0V221.6M362.1 215.9V218.4M366.1 221.7V224.8M369.3 222.8V224.3M370.1 222.3V224.5M370.9 220.4V222.8M371.7 218.9V222.2M372.5 216.8V219.8M373.3 214.2V217.3M374.1 213.1V214.6M375.7 212.2V213.6M384.6 215.1V216.5M391.0 220.5V222.1M395.9 223.1V227.0M396.7 221.6V223.8M398.3 220.3V221.9M399.9 219.5V220.9M400.7 218.4V220.4M409.6 229.9V231.3M412.8 229.7V231.1M414.4 228.8V230.5M420.0 229.9V232.0M420.8 228.6V230.8M421.6 228.4V231.5M429.7 233.8V235.4M435.3 237.2V238.7M437.7 237.1V238.5M438.5 236.5V238.2M439.3 235.2V236.8M440.1 234.4V237.4M441.8 233.2V235.2M442.6 232.2V234.8M444.2 231.5V232.9M445.0 231.1V235.0M459.5 245.9V247.3M464.3 248.5V249.9M470.7 253.0V254.4M474.8 255.6V257.5M475.6 254.4V256.3M476.4 252.3V255.3M477.2 251.8V256.0M478.0 251.3V254.3M478.8 250.0V252.3M479.6 250.2V251.6M481.2 249.6V253.9M489.3 257.8V259.8M490.1 256.8V258.2M490.9 256.2V257.6M491.7 251.8V256.7M494.9 254.4V256.8M499.7 259.5V260.9M507.8 274.4V276.7M508.6 272.5V275.9M509.4 271.8V273.8M510.2 269.3V273.4M511.0 267.1V270.0M511.8 264.8V268.0M512.6 261.9V266.0M514.2 263.4V265.3M519.0 265.3V269.1M519.8 267.1V268.5M520.6 263.9V267.8M527.1 268.7V271.7M532.7 272.3V274.0M534.3 272.0V273.6M536.7 270.1V271.5M541.6 274.1V276.1M544.8 278.0V282.1M545.6 277.6V279.5M552.8 279.9V284.1M553.7 278.8V281.4M557.7 280.5V282.4M559.3 277.1V282.9M561.7 280.0V281.4M564.1 281.1V282.5M570.6 286.7V288.9M572.2 285.9V288.5M573.0 287.2V288.6M573.8 285.9V288.5M574.6 285.6V287.5M575.4 284.4V287.0M578.6 286.5V287.9M579.4 284.9V287.1M580.2 284.1V285.9M581.0 282.7V285.8M581.8 277.1V282.8M582.6 275.7V277.9M583.4 273.4V277.2M592.3 283.0V285.9M593.1 283.2V284.6M593.9 282.0V284.4M598.7 287.3V288.7M600.3 286.4V289.7M601.1 285.2V287.4M602.0 281.4V285.5M602.8 282.1V285.1M603.6 281.2V282.6M604.4 279.4V282.4M606.0 278.6V280.7M606.8 278.0V279.4M608.4 276.3V279.0M611.6 276.8V278.8M614.0 275.3V278.0M614.8 274.6V276.8M615.6 272.6V274.9M616.4 272.0V275.4M624.5 289.2V293.1M625.3 285.3V290.6M626.1 284.1V288.8M626.9 280.8V285.2M633.3 283.9V287.4M636.6 286.0V288.7M637.4 286.3V290.9M638.2 282.4V286.9M639.0 284.0V286.0M642.2 285.8V287.6M646.2 287.7V289.9M647.0 286.0V289.1M647.8 285.5V287.7M650.3 290.8V292.2M657.5 290.3V295.2M660.7 292.2V295.5M666.4 293.7V295.3M667.2 290.8V295.6M668.8 292.1V294.0M669.6 291.9V295.8M670.4 291.2V293.0M672.0 290.2V291.6M676.0 289.1V293.6M680.8 295.3V296.7M684.1 296.8V298.3M684.9 295.2V298.1M685.7 293.6V296.9M686.5 294.3V298.3M695.3 299.8V301.3M696.1 299.5V300.9M696.9 298.7V300.1M697.7 298.4V299.8M703.4 303.5V305.5M707.4 305.1V306.8M708.2 304.6V307.2M709.0 303.7V307.5M713.0 300.8V305.1M713.8 300.4V303.1M714.7 298.4V301.7M717.1 298.0V300.1M725.9 308.0V310.1M726.7 306.6V308.9M730.8 306.0V308.5M731.6 305.5V306.9M732.4 303.8V306.4M734.0 304.9V306.8M734.8 303.7V305.9M735.6 302.9V304.7M736.4 304.0V305.4M738.8 305.0V306.5M740.4 306.1V307.5M741.2 305.1V308.9M743.6 303.1V304.5M747.7 304.3V305.7M756.5 315.7V317.1M758.9 313.1V315.2M759.7 311.5V316.3M761.3 309.8V311.2M776.6 325.4V327.1M777.4 324.0V325.9M782.3 327.8V330.1M783.1 327.7V329.1M783.9 327.7V329.1M791.1 328.7V330.1M794.3 330.6V332.2M799.2 329.8V332.9M800.0 327.8V330.6M800.8 326.3V329.1M811.3 335.1V336.5M814.5 336.6V338.1M818.5 340.1V341.5M820.1 340.0V341.8M821.7 339.5V341.8M825.7 339.1V340.6M827.4 338.4V339.8M832.2 339.3V340.7M837.0 338.0V340.2M840.2 337.2V339.2M841.0 336.5V338.1M841.8 336.2V337.6M844.3 334.8V336.7M851.5 338.5V340.5M852.3 338.1V339.5M853.1 337.5V339.1M861.2 344.3V346.1M865.2 345.8V347.6M869.2 346.4V348.8M870.8 345.1V346.6M872.4 344.4V345.8M874.0 343.7V345.1M880.5 342.2V344.2M882.1 340.9V343.0M887.7 340.1V341.5M888.5 339.1V340.5M889.3 337.5V339.7M893.4 339.9V342.5M894.2 339.5V340.9M899.0 336.7V339.3M899.8 335.6V337.1M911.9 330.1V331.5M913.5 328.5V329.9M919.1 328.4V329.8M924.0 324.9V326.7M936.8 328.8V330.2M941.7 327.0V328.7M942.5 326.2V329.3M944.9 327.2V330.9M961.8 325.9V327.8"/>
<path class="cy" d="M11.0 261.2V262.7M11.8 261.7V263.1M15.0 263.4V264.9M15.8 264.5V265.9M16.6 265.4V267.0M17.5 266.0V267.4M18.3 266.9V268.7M21.5 267.9V269.3M23.1 268.6V270.0M23.9 268.2V270.2M24.7 268.4V269.8M25.5 268.5V269.9M27.1 267.6V269.2M27.9 267.6V270.9M34.4 277.9V280.2M36.8 283.6V285.0M40.1 278.2V279.6M42.5 278.7V281.4M45.7 285.2V286.6M49.7 281.0V282.4M52.1 279.4V280.8M52.9 277.4V280.4M57.0 278.8V282.1M57.8 278.9V280.3M61.0 276.5V277.9M64.2 277.9V279.3M69.0 274.0V275.8M69.8 273.2V275.3M72.3 272.3V273.7M73.1 272.0V273.4M77.1 274.2V275.6M78.7 275.1V276.5M82.7 271.0V273.6M89.2 268.3V271.0M95.6 264.5V265.9M97.2 263.4V264.8M98.8 262.6V265.1M101.2 264.1V266.1M106.1 261.8V263.2M106.9 261.7V263.5M108.5 260.9V262.3M110.1 259.9V263.5M110.9 262.1V265.4M111.7 262.0V263.4M118.1 264.5V265.9M119.0 262.8V265.9M119.8 264.8V266.2M120.6 265.6V267.0M125.4 265.7V267.4M127.0 265.2V268.6M127.8 265.1V266.5M128.6 265.4V266.8M130.2 265.5V269.2M131.8 265.8V267.2M133.4 265.8V267.7M135.1 264.1V266.8M137.5 265.6V266.7M138.3 265.2V266.3M139.1 265.2V266.3M139.9 265.0V266.1M140.7 265.3V266.4M141.5 265.7V266.8M142.3 265.2V266.3M143.1 264.5V265.6M144.7 262.5V264.2M146.3 261.2V262.3M147.1 261.0V262.1M147.9 261.2V262.3M148.7 261.3V262.4M149.5 261.5V262.6M150.3 261.6V262.7M151.2 261.8V262.9M152.0 262.1V263.2M152.8 262.5V263.6M153.6 262.7V263.8M154.4 263.0V264.1M156.0 262.8V263.9M156.8 262.9V264.0M157.6 262.9V264.0M158.4 262.6V263.7M160.0 262.4V263.5M160.8 262.0V263.2M161.6 261.9V263.0M162.4 261.8V262.9M163.2 261.9V263.0M164.0 261.7V262.8M164.8 261.6V262.7M165.6 261.5V262.6M166.4 260.9V262.0M167.3 260.7V261.8M168.1 260.5V261.6M168.9 259.9V261.3M169.7 260.9V262.0M170.5 261.3V262.4M171.3 261.7V262.8M172.1 262.0V263.1M172.9 262.0V263.1M173.7 261.9V263.0M175.3 261.9V263.0M176.1 261.7V262.8M177.7 262.1V263.2M178.5 262.3V263.4M179.3 262.5V263.6M180.1 262.9V264.0M180.9 263.1V264.2M181.7 263.2V264.3M182.5 263.3V264.4M183.4 263.8V264.9M184.2 263.6V264.7M185.0 263.6V264.7M185.8 263.6V264.7M186.6 263.7V264.8M187.4 263.8V264.9M188.2 263.7V264.8M189.0 263.5V264.6M189.8 263.0V264.8M190.6 262.5V263.6M191.4 262.4V263.5M192.2 262.4V263.5M193.0 262.6V263.7M193.8 262.7V263.8M194.6 262.8V263.9M195.4 262.9V264.0M197.0 263.2V264.3M197.8 263.2V264.3M198.6 263.2V264.3M199.5 263.2V264.3M200.3 262.8V263.9M201.1 262.5V263.6M201.9 262.0V263.1M202.7 261.6V262.7M203.5 261.3V262.4M204.3 261.7V262.8M205.1 261.7V262.8M205.9 262.2V263.3M206.7 262.3V263.4M207.5 262.6V263.7M208.3 262.8V263.9M209.9 262.8V263.9M210.7 262.7V263.8M211.5 262.7V263.8M212.3 262.5V263.6M213.1 262.8V263.9M213.9 263.1V264.2M214.7 263.4V264.5M215.6 263.7V264.8M217.2 264.2V265.3M218.0 264.2V265.3M218.8 264.0V265.1M219.6 263.9V265.0M220.4 263.8V264.9M221.2 263.6V264.7M222.0 263.7V264.8M222.8 263.7V264.8M223.6 263.7V264.8M224.4 263.8V264.9M225.2 263.8V264.9M226.0 264.1V265.2M226.8 264.4V265.5M228.4 264.9V266.0M229.2 265.4V266.5M230.0 265.3V266.4M230.8 265.0V266.1M231.7 265.0V266.1M232.5 264.9V266.0M233.3 264.6V265.7M234.1 264.2V265.3M234.9 263.7V264.8M235.7 264.1V265.2M237.3 264.4V265.5M238.1 264.3V265.4M238.9 264.6V265.7M239.7 264.3V265.4M240.5 263.9V265.0M241.3 263.5V265.2M242.1 262.5V263.9M243.7 262.6V263.7M245.3 263.2V264.3M246.1 263.4V264.5M246.9 263.6V264.7M248.6 262.3V263.9M249.4 262.5V263.6M250.2 262.2V263.3M251.8 261.7V262.8M253.4 261.7V262.8M254.2 261.5V262.6M255.0 260.8V262.1M255.8 260.4V261.8M259.0 260.1V261.5M259.8 260.4V262.3M266.3 255.5V256.9M269.5 253.0V254.5M273.5 254.9V256.3M277.5 254.3V256.2M280.0 255.0V256.4M282.4 253.0V254.4M287.2 255.8V258.5M288.0 255.0V256.5M296.1 252.3V253.9M299.3 253.0V254.4M307.3 239.9V241.7M313.8 236.5V237.9M319.4 236.0V237.4M325.0 233.8V236.5M329.9 228.3V229.7M335.5 221.0V222.8M337.1 222.0V224.5M344.4 226.2V227.6M345.2 226.1V227.5M354.8 225.5V228.1M357.2 224.9V227.1M376.6 212.4V214.8M377.4 211.6V213.5M378.2 211.7V213.3M381.4 211.9V213.3M387.0 217.7V219.2M397.5 218.2V222.4M404.7 222.6V224.8M413.6 229.6V231.2M418.4 230.4V231.8M419.2 230.6V232.0M422.4 228.6V230.0M427.3 232.3V234.2M433.7 234.8V238.4M436.9 234.7V238.3M441.0 234.2V237.4M445.8 230.4V233.6M447.4 230.9V232.3M451.4 240.0V243.7M452.2 241.8V243.5M453.8 241.9V243.3M455.4 243.0V244.4M469.1 252.9V254.9M469.9 253.1V254.5M480.4 250.4V252.9M482.0 252.8V256.8M486.8 257.4V258.8M487.6 257.4V259.0M492.5 254.5V255.9M494.1 253.2V256.8M501.3 260.2V261.6M513.4 264.0V265.7M522.3 267.2V268.6M524.7 268.9V270.3M525.5 268.8V270.2M527.9 268.6V270.0M531.1 269.0V274.0M533.5 268.9V274.1M535.1 271.8V273.4M535.9 270.4V274.5M542.4 271.5V277.0M547.2 277.0V281.8M549.6 278.1V282.0M551.2 277.0V281.2M554.5 278.6V280.3M555.3 278.7V280.3M556.9 280.9V282.3M560.1 280.2V281.6M560.9 280.0V281.4M563.3 281.7V283.1M569.8 286.2V288.8M586.7 277.4V278.8M588.3 278.5V280.5M589.9 278.1V284.4M605.2 279.1V281.2M610.0 277.2V278.6M627.7 280.8V282.3M630.9 283.3V286.0M631.7 284.3V286.0M640.6 284.8V286.4M641.4 284.5V287.7M645.4 288.8V290.2M652.7 291.8V293.2M654.3 292.7V297.2M655.9 293.3V295.1M658.3 293.3V295.3M659.1 293.5V294.9M661.5 290.6V293.6M663.1 293.1V294.6M668.0 292.4V293.8M671.2 290.4V291.8M672.8 286.4V290.7M675.2 291.1V293.8M676.8 289.9V291.9M687.3 292.7V295.5M688.1 294.6V296.0M688.9 294.3V295.7M692.9 299.0V300.4M693.7 299.0V300.4M702.6 304.2V305.6M704.2 303.6V305.0M705.0 303.2V304.6M709.8 303.0V304.4M710.6 303.2V304.6M712.2 303.9V305.3M715.5 298.9V300.3M716.3 298.6V300.0M717.9 297.7V299.1M721.1 302.7V304.1M722.7 302.1V304.7M737.2 304.1V305.5M742.0 304.4V306.2M742.8 303.7V305.1M744.4 302.3V303.7M749.3 305.0V306.4M754.1 311.7V313.1M757.3 314.7V316.3M758.1 314.7V316.1M760.5 310.8V313.8M771.0 321.9V323.3M773.4 323.1V325.8M780.7 328.4V330.0M784.7 327.6V329.0M785.5 327.7V331.5M786.3 328.4V329.8M787.1 328.8V330.6M787.9 329.7V331.2M788.7 329.7V331.1M789.5 328.9V330.7M790.3 327.0V329.4M793.5 331.1V332.5M795.2 330.3V331.7M796.0 330.3V331.7M798.4 332.2V334.2M801.6 326.1V327.5M803.2 326.1V327.5M816.1 338.3V339.7M820.9 339.9V341.8M823.3 339.5V340.9M824.1 339.0V340.4M824.9 339.3V340.7M826.5 338.5V339.9M831.4 339.3V341.3M833.8 339.9V341.3M835.4 338.7V340.1M836.2 338.6V340.3M837.8 337.6V339.1M839.4 337.9V339.4M842.6 335.9V337.4M843.5 335.2V336.7M845.9 335.2V336.6M846.7 335.6V337.0M847.5 334.5V336.7M859.6 344.2V345.6M860.4 344.5V345.9M862.8 344.5V345.9M863.6 344.4V345.8M867.6 346.7V348.1M870.0 346.0V347.4M871.6 344.6V346.1M873.2 344.1V345.6M875.7 343.0V344.9M878.1 342.7V344.2M879.7 342.9V344.3M881.3 341.7V343.6M885.3 339.4V340.8M895.0 339.3V340.7M896.6 338.5V340.4M903.8 333.1V334.5M904.6 332.8V334.2M908.7 329.3V330.7M909.5 330.4V333.2M910.3 329.8V331.8M911.1 330.2V331.6M916.7 328.8V330.2M919.9 327.5V329.1M922.3 325.7V329.5M923.1 325.4V326.8M924.8 322.7V326.2M926.4 325.5V326.9M928.0 325.3V326.7M928.8 325.1V326.7M932.0 328.0V329.4M936.0 328.9V330.3M947.3 329.0V330.4M948.1 327.5V329.7M948.9 326.4V328.4M951.3 328.7V330.1M953.7 328.9V330.3M957.0 327.2V329.0M957.8 326.8V328.2M959.4 327.1V328.5M962.6 325.9V327.4"/>
<path class="sp" d="M6.6 423.5 L7.4 423.9 L8.2 421.7 L9.0 422.7 L9.8 423.1 L10.6 421.9 L11.4 420.8 L12.2 420.8 L13.0 421.0 L13.9 423.4 L14.7 425.0 L15.5 429.8 L16.3 430.8 L17.1 428.8 L17.9 428.5 L18.7 428.2 L19.5 428.6 L20.3 427.8 L21.1 429.3 L21.9 429.8 L22.7 431.2 L23.5 429.3 L24.3 429.1 L25.1 429.9 L25.9 426.8 L26.7 424.6 L27.5 425.3 L28.3 424.9 L29.1 429.6 L30.0 415.4 L30.8 395.5 L31.6 393.3 L32.4 392.6 L33.2 391.2 L34.0 389.0 L34.8 387.5 L35.6 385.8 L36.4 384.1 L37.2 388.0 L38.0 389.6 L38.8 390.5 L39.6 391.9 L40.4 391.1 L41.2 392.0 L42.0 393.2 L42.8 392.8 L43.6 393.5 L44.4 391.8 L45.2 389.6 L46.1 390.9 L46.9 393.9 L47.7 394.1 L48.5 396.3 L49.3 396.3 L50.1 396.0 L50.9 395.5 L51.7 393.6 L52.5 394.1 L53.3 394.3 L54.1 395.6 L54.9 395.7 L55.7 395.6 L56.5 391.5 L57.3 391.9 L58.1 392.5 L58.9 392.9 L59.7 391.8 L60.5 393.7 L61.3 393.2 L62.2 392.7 L63.0 393.2 L63.8 392.6 L64.6 390.8 L65.4 390.4 L66.2 389.7 L67.0 390.9 L67.8 391.6 L68.6 391.6 L69.4 389.4 L70.2 389.4 L71.0 389.3 L71.8 388.5 L72.6 388.1 L73.4 390.0 L74.2 390.0 L75.0 390.9 L75.8 391.8 L76.6 393.5 L77.4 392.5 L78.3 392.0 L79.1 388.4 L79.9 385.0 L80.7 383.4 L81.5 386.8 L82.3 390.6 L83.1 392.9 L83.9 396.5 L84.7 397.2 L85.5 395.1 L86.3 397.0 L87.1 396.2 L87.9 399.8 L88.7 401.0 L89.5 404.5 L90.3 405.3 L91.1 402.6 L91.9 402.3 L92.7 399.9 L93.5 400.5 L94.4 398.9 L95.2 401.0 L96.0 402.6 L96.8 404.8 L97.6 404.9 L98.4 404.5 L99.2 401.0 L100.0 401.7 L100.8 403.1 L101.6 402.8 L102.4 400.1 L103.2 404.3 L104.0 403.4 L104.8 400.7 L105.6 400.7 L106.4 399.1 L107.2 396.9 L108.0 400.9 L108.8 403.4 L109.6 404.3 L110.5 403.2 L111.3 400.5 L112.1 398.1 L112.9 396.8 L113.7 396.1 L114.5 396.1 L115.3 395.3 L116.1 394.9 L116.9 391.9 L117.7 390.3 L118.5 388.9 L119.3 388.8 L120.1 391.0 L120.9 391.5 L121.7 390.2 L122.5 391.3 L123.3 390.5 L124.1 390.4 L124.9 390.7 L125.7 390.5 L126.6 390.6 L127.4 392.5 L128.2 395.1 L129.0 394.4 L129.8 392.2 L130.6 390.4 L131.4 390.0 L132.2 390.8 L133.0 393.1 L133.8 391.9 L134.6 390.8 L135.4 391.7 L136.2 394.4 L137.0 395.1 L137.8 396.6 L138.6 395.3 L139.4 394.9 L140.2 394.3 L141.0 394.0 L141.8 393.2 L142.7 391.5 L143.5 393.6 L144.3 391.6 L145.1 394.3 L145.9 395.3 L146.7 397.6 L147.5 397.9 L148.3 397.5 L149.1 395.8 L149.9 397.0 L150.7 396.2 L151.5 397.2 L152.3 397.0 L153.1 397.9 L153.9 398.1 L154.7 400.0 L155.5 397.9 L156.3 396.8 L157.1 397.0 L157.9 395.3 L158.8 395.0 L159.6 396.9 L160.4 398.1 L161.2 400.0 L162.0 401.6 L162.8 401.2 L163.6 401.9 L164.4 404.3 L165.2 404.8 L166.0 403.7 L166.8 405.2 L167.6 402.6 L168.4 401.0 L169.2 401.0 L170.0 398.1 L170.8 400.2 L171.6 399.4 L172.4 400.3 L173.2 398.0 L174.0 397.7 L174.9 398.1 L175.7 398.3 L176.5 399.1 L177.3 397.3 L178.1 398.7 L178.9 400.9 L179.7 402.0 L180.5 402.8 L181.3 405.3 L182.1 406.0 L182.9 404.6 L183.7 404.2 L184.5 402.8 L185.3 401.7 L186.1 399.6 L186.9 398.1 L187.7 398.6 L188.5 400.6 L189.3 400.3 L190.1 402.1 L191.0 401.3 L191.8 402.8 L192.6 401.3 L193.4 402.8 L194.2 401.3 L195.0 402.5 L195.8 401.0 L196.6 400.4 L197.4 400.7 L198.2 398.9 L199.0 399.8 L199.8 397.8 L200.6 396.3 L201.4 396.1 L202.2 397.1 L203.0 398.7 L203.8 398.5 L204.6 400.8 L205.4 400.2 L206.2 399.4 L207.1 399.3 L207.9 396.4 L208.7 397.1 L209.5 397.9 L210.3 396.5 L211.1 397.0 L211.9 396.6 L212.7 398.8 L213.5 398.4 L214.3 399.6 L215.1 398.7 L215.9 399.4 L216.7 399.8 L217.5 398.8 L218.3 398.3 L219.1 397.7 L219.9 399.4 L220.7 399.9 L221.5 400.1 L222.3 401.1 L223.2 401.9 L224.0 402.3 L224.8 404.1 L225.6 404.1 L226.4 404.9 L227.2 406.1 L228.0 408.6 L228.8 407.1 L229.6 404.5 L230.4 404.6 L231.2 405.2 L232.0 404.1 L232.8 405.3 L233.6 405.4 L234.4 405.5 L235.2 406.7 L236.0 406.7 L236.8 406.8 L237.6 407.0 L238.4 405.5 L239.3 403.9 L240.1 403.0 L240.9 405.4 L241.7 405.9 L242.5 407.6 L243.3 408.1 L244.1 405.6 L244.9 404.3 L245.7 404.3 L246.5 402.3 L247.3 401.5 L248.1 400.6 L248.9 401.1 L249.7 402.1 L250.5 402.1 L251.3 403.7 L252.1 404.7 L252.9 406.0 L253.7 406.4 L254.5 407.8 L255.4 408.9 L256.2 409.8 L257.0 409.8 L257.8 412.2 L258.6 415.7 L259.4 412.9 L260.2 410.7 L261.0 409.0 L261.8 409.5 L262.6 408.8 L263.4 410.4 L264.2 410.9 L265.0 411.8 L265.8 416.1 L266.6 417.5 L267.4 420.8 L268.2 422.2 L269.0 422.0 L269.8 420.5 L270.6 419.5 L271.5 420.4 L272.3 419.6 L273.1 420.8 L273.9 420.8 L274.7 421.5 L275.5 422.6 L276.3 425.1 L277.1 425.4 L277.9 423.3 L278.7 421.6 L279.5 420.6 L280.3 421.5 L281.1 422.4 L281.9 426.3 L282.7 429.7 L283.5 430.7 L284.3 429.6 L285.1 427.1 L285.9 426.0 L286.7 425.5 L287.6 425.0 L288.4 425.7 L289.2 426.8 L290.0 427.3 L290.8 426.8 L291.6 426.4 L292.4 427.7 L293.2 427.2 L294.0 426.8 L294.8 429.3 L295.6 429.1 L296.4 429.5 L297.2 428.0 L298.0 428.8 L298.8 429.2 L299.6 430.8 L300.4 431.4 L301.2 433.8 L302.0 426.6 L302.8 423.5 L303.7 420.9 L304.5 417.1 L305.3 417.0 L306.1 417.1 L306.9 418.6 L307.7 418.6 L308.5 418.1 L309.3 416.3 L310.1 417.3 L310.9 418.0 L311.7 420.4 L312.5 422.6 L313.3 422.7 L314.1 424.7 L314.9 426.5 L315.7 426.3 L316.5 427.6 L317.3 428.2 L318.1 428.1 L318.9 427.7 L319.8 427.7 L320.6 427.3 L321.4 425.9 L322.2 425.7 L323.0 426.0 L323.8 426.8 L324.6 426.7 L325.4 426.3 L326.2 426.0 L327.0 426.0 L327.8 426.7 L328.6 427.5 L329.4 429.8 L330.2 431.3 L331.0 433.8 L331.8 434.8 L332.6 437.8 L333.4 438.6 L334.2 441.3 L335.0 454.4 L335.9 469.0 L336.7 466.3 L337.5 465.8 L338.3 464.0 L339.1 461.4 L339.9 458.8 L340.7 458.1 L341.5 459.5 L342.3 458.5 L343.1 460.0 L343.9 459.5 L344.7 460.4 L345.5 463.0 L346.3 464.3 L347.1 464.8 L347.9 466.0 L348.7 467.6 L349.5 465.5 L350.3 465.0 L351.1 463.9 L352.0 462.1 L352.8 462.3 L353.6 462.5 L354.4 460.7 L355.2 459.2 L356.0 461.3 L356.8 462.7 L357.6 465.9 L358.4 468.3 L359.2 473.0 L360.0 474.8 L360.8 474.4 L361.6 473.7 L362.4 471.9 L363.2 470.5 L364.0 472.0 L364.8 475.0 L365.6 476.9 L366.4 477.8 L367.2 478.6 L368.1 479.7 L368.9 478.6 L369.7 478.5 L370.5 476.8 L371.3 477.6 L372.1 479.3 L372.9 482.4 L373.7 484.2 L374.5 484.7 L375.3 486.8 L376.1 486.2 L376.9 488.4 L377.7 491.8 L378.5 489.7 L379.3 487.6 L380.1 486.6 L380.9 484.9 L381.7 482.9 L382.5 483.5 L383.3 482.5 L384.2 481.0 L385.0 479.7 L385.8 479.1 L386.6 478.2 L387.4 477.6 L388.2 476.4 L389.0 477.0 L389.8 475.8 L390.6 474.4 L391.4 474.3 L392.2 474.1 L393.0 472.7 L393.8 471.4 L394.6 471.0 L395.4 470.8 L396.2 470.6 L397.0 473.2 L397.8 473.4 L398.6 476.1 L399.4 479.1 L400.3 481.3 L401.1 481.3 L401.9 481.5 L402.7 480.9 L403.5 478.5 L404.3 478.0 L405.1 476.2 L405.9 475.1 L406.7 474.3 L407.5 474.9 L408.3 475.0 L409.1 474.7 L409.9 476.0 L410.7 476.3 L411.5 474.2 L412.3 474.2 L413.1 474.3 L413.9 475.0 L414.7 475.8 L415.5 473.9 L416.4 475.0 L417.2 475.1 L418.0 474.6 L418.8 474.7 L419.6 473.2 L420.4 474.4 L421.2 476.6 L422.0 478.6 L422.8 479.6 L423.6 478.6 L424.4 475.9 L425.2 474.7 L426.0 472.8 L426.8 473.4 L427.6 473.2 L428.4 471.7 L429.2 472.3 L430.0 473.6 L430.8 474.7 L431.6 474.5 L432.5 475.2 L433.3 476.6 L434.1 476.9 L434.9 478.3 L435.7 478.3 L436.5 478.4 L437.3 478.6 L438.1 476.5 L438.9 478.1 L439.7 477.0 L440.5 476.5 L441.3 477.3 L442.1 476.9 L442.9 476.4 L443.7 478.2 L444.5 477.4 L445.3 477.7 L446.1 479.1 L446.9 481.1 L447.7 481.9 L448.6 481.6 L449.4 481.8 L450.2 478.9 L451.0 477.9 L451.8 476.8 L452.6 477.8 L453.4 481.1 L454.2 484.4 L455.0 485.9 L455.8 488.0 L456.6 492.0 L457.4 494.7 L458.2 495.8 L459.0 495.8 L459.8 497.5 L460.6 498.5 L461.4 496.6 L462.2 496.4 L463.0 497.2 L463.8 497.1 L464.7 497.2 L465.5 499.8 L466.3 502.2 L467.1 504.2 L467.9 506.6 L468.7 506.2 L469.5 507.1 L470.3 507.2 L471.1 506.8 L471.9 504.2 L472.7 502.4 L473.5 501.4 L474.3 502.2 L475.1 501.8 L475.9 500.0 L476.7 501.0 L477.5 502.9 L478.3 502.6 L479.1 504.7 L479.9 505.8 L480.8 506.6 L481.6 506.6 L482.4 506.8 L483.2 509.8 L484.0 508.0 L484.8 507.8 L485.6 511.7 L486.4 516.4 L487.2 519.6 L488.0 516.3 L488.8 513.5 L489.6 513.4 L490.4 513.0 L491.2 512.4 L492.0 509.7 L492.8 509.0 L493.6 505.3 L494.4 503.9 L495.2 505.0 L496.0 503.9 L496.9 504.3 L497.7 502.4 L498.5 501.0 L499.3 500.6 L500.1 501.9 L500.9 497.3 L501.7 489.9 L502.5 491.2 L503.3 494.0 L504.1 500.2 L504.9 501.6 L505.7 497.1 L506.5 493.8 L507.3 490.7 L508.1 487.5 L508.9 485.2 L509.7 485.2 L510.5 487.7 L511.3 488.0 L512.1 489.2 L513.0 489.7 L513.8 488.7 L514.6 487.9 L515.4 485.8 L516.2 482.6 L517.0 482.0 L517.8 485.1 L518.6 488.7 L519.4 489.8 L520.2 490.6 L521.0 488.9 L521.8 488.6 L522.6 487.5 L523.4 487.5 L524.2 485.8 L525.0 485.2 L525.8 484.2 L526.6 484.3 L527.4 485.6 L528.2 486.4 L529.1 488.4 L529.9 489.5 L530.7 489.4 L531.5 488.7 L532.3 488.4 L533.1 485.7 L533.9 483.9 L534.7 481.9 L535.5 479.9 L536.3 479.4 L537.1 479.6 L537.9 480.1 L538.7 480.9 L539.5 481.3 L540.3 482.1 L541.1 483.0 L541.9 483.5 L542.7 481.6 L543.5 481.3 L544.3 480.7 L545.2 484.0 L546.0 485.1 L546.8 483.7 L547.6 482.7 L548.4 481.1 L549.2 481.7 L550.0 478.5 L550.8 478.7 L551.6 476.9 L552.4 475.2 L553.2 474.3 L554.0 477.5 L554.8 477.9 L555.6 479.8 L556.4 480.8 L557.2 482.7 L558.0 483.8 L558.8 482.9 L559.6 481.0 L560.4 479.8 L561.3 480.4 L562.1 479.9 L562.9 481.7 L563.7 482.1 L564.5 481.5 L565.3 478.6 L566.1 475.8 L566.9 473.9 L567.7 472.6 L568.5 471.9 L569.3 470.6 L570.1 469.4 L570.9 469.8 L571.7 469.7 L572.5 469.0 L573.3 471.1 L574.1 471.4 L574.9 472.7 L575.7 471.4 L576.5 470.4 L577.4 468.7 L578.2 468.8 L579.0 469.1 L579.8 467.3 L580.6 468.2 L581.4 471.5 L582.2 474.9 L583.0 475.4 L583.8 473.1 L584.6 472.1 L585.4 470.1 L586.2 471.0 L587.0 471.9 L587.8 471.7 L588.6 469.1 L589.4 464.1 L590.2 459.9 L591.0 456.9 L591.8 459.2 L592.6 460.3 L593.5 459.4 L594.3 460.3 L595.1 458.9 L595.9 458.7 L596.7 457.1 L597.5 454.2 L598.3 455.5 L599.1 456.2 L599.9 456.5 L600.7 455.6 L601.5 456.8 L602.3 455.8 L603.1 460.7 L603.9 463.9 L604.7 468.5 L605.5 472.3 L606.3 473.5 L607.1 470.8 L607.9 469.9 L608.7 471.4 L609.6 472.4 L610.4 473.4 L611.2 471.2 L612.0 471.7 L612.8 474.3 L613.6 475.6 L614.4 479.1 L615.2 485.8 L616.0 491.7 L616.8 488.4 L617.6 480.7 L618.4 474.7 L619.2 470.0 L620.0 470.0 L620.8 468.6 L621.6 467.4 L622.4 466.0 L623.2 462.2 L624.0 461.1 L624.8 458.6 L625.7 459.6 L626.5 459.0 L627.3 459.8 L628.1 462.2 L628.9 463.7 L629.7 464.1 L630.5 463.5 L631.3 463.4 L632.1 461.1 L632.9 458.0 L633.7 456.5 L634.5 456.7 L635.3 458.2 L636.1 457.7 L636.9 457.1 L637.7 457.5 L638.5 456.8 L639.3 456.5 L640.1 453.9 L640.9 456.1 L641.8 455.4 L642.6 455.7 L643.4 453.2 L644.2 452.5 L645.0 452.0 L645.8 451.6 L646.6 452.3 L647.4 451.6 L648.2 452.6 L649.0 446.4 L649.8 444.7 L650.6 444.9 L651.4 445.6 L652.2 444.9 L653.0 445.3 L653.8 444.7 L654.6 442.6 L655.4 443.3 L656.2 441.6 L657.0 443.9 L657.9 443.9 L658.7 445.4 L659.5 446.4 L660.3 445.6 L661.1 445.5 L661.9 445.2 L662.7 445.8 L663.5 445.7 L664.3 444.6 L665.1 446.2 L665.9 446.1 L666.7 446.8 L667.5 447.2 L668.3 448.5 L669.1 450.8 L669.9 450.9 L670.7 451.7 L671.5 451.3 L672.3 448.8 L673.1 448.2 L674.0 445.0 L674.8 444.8 L675.6 445.7 L676.4 448.0 L677.2 449.7 L678.0 452.5 L678.8 453.7 L679.6 454.3 L680.4 454.6 L681.2 454.6 L682.0 456.4 L682.8 456.7 L683.6 455.1 L684.4 451.8 L685.2 452.5 L686.0 452.6 L686.8 452.2 L687.6 451.0 L688.4 452.8 L689.2 452.7 L690.1 450.6 L690.9 450.7 L691.7 444.1 L692.5 441.0 L693.3 443.3 L694.1 444.6 L694.9 445.0 L695.7 446.5 L696.5 448.8 L697.3 450.9 L698.1 453.8 L698.9 455.4 L699.7 457.7 L700.5 452.0 L701.3 448.4 L702.1 445.7 L702.9 441.8 L703.7 437.4 L704.5 436.4 L705.3 434.6 L706.2 434.3 L707.0 431.5 L707.8 434.5 L708.6 436.9 L709.4 436.9 L710.2 433.5 L711.0 432.2 L711.8 430.2 L712.6 429.5 L713.4 430.9 L714.2 431.2 L715.0 434.8 L715.8 435.0 L716.6 434.6 L717.4 434.1 L718.2 435.6 L719.0 435.8 L719.8 433.7 L720.6 432.8 L721.4 431.9 L722.3 430.4 L723.1 426.1 L723.9 422.9 L724.7 420.1 L725.5 421.1 L726.3 422.5 L727.1 426.1 L727.9 429.5 L728.7 430.3 L729.5 431.9 L730.3 433.9 L731.1 434.7 L731.9 436.9 L732.7 439.9 L733.5 440.0 L734.3 441.4 L735.1 442.0 L735.9 445.0 L736.7 445.6 L737.5 445.8 L738.4 445.0 L739.2 443.7 L740.0 444.1 L740.8 442.7 L741.6 442.7 L742.4 442.7 L743.2 442.8 L744.0 442.9 L744.8 445.5 L745.6 446.8 L746.4 447.3 L747.2 446.0 L748.0 446.8 L748.8 444.5 L749.6 443.8 L750.4 442.5 L751.2 439.8 L752.0 438.0 L752.8 436.6 L753.6 434.7 L754.5 434.1 L755.3 432.4 L756.1 430.4 L756.9 427.9 L757.7 428.0 L758.5 430.8 L759.3 431.3 L760.1 433.2 L760.9 433.1 L761.7 433.4 L762.5 431.3 L763.3 431.7 L764.1 430.9 L764.9 430.4 L765.7 429.2 L766.5 428.2 L767.3 425.4 L768.1 425.0 L768.9 423.4 L769.7 423.7 L770.6 423.0 L771.4 420.7 L772.2 419.9 L773.0 419.5 L773.8 420.0 L774.6 418.6 L775.4 419.0 L776.2 416.0 L777.0 415.3 L777.8 411.8 L778.6 411.9 L779.4 411.2 L780.2 409.8 L781.0 409.5 L781.8 410.0 L782.6 409.3 L783.4 409.0 L784.2 410.5 L785.0 410.0 L785.8 409.3 L786.7 409.0 L787.5 409.8 L788.3 410.0 L789.1 409.1 L789.9 409.2 L790.7 408.5 L791.5 406.5 L792.3 406.1 L793.1 404.4 L793.9 404.7 L794.7 403.1 L795.5 402.9 L796.3 403.7 L797.1 404.8 L797.9 402.3 L798.7 402.3 L799.5 405.0 L800.3 408.6 L801.1 409.2 L801.9 410.3 L802.8 409.4 L803.6 407.9 L804.4 408.0 L805.2 404.4 L806.0 404.4 L806.8 402.5 L807.6 399.5 L808.4 398.3 L809.2 398.5 L810.0 397.3 L810.8 397.3 L811.6 397.4 L812.4 396.9 L813.2 398.3 L814.0 398.1 L814.8 396.9 L815.6 396.3 L816.4 397.2 L817.2 395.0 L818.0 390.9 L818.9 391.3 L819.7 389.8 L820.5 391.3 L821.3 391.7 L822.1 390.5 L822.9 391.4 L823.7 391.7 L824.5 391.1 L825.3 392.8 L826.1 392.0 L826.9 393.2 L827.7 393.7 L828.5 396.0 L829.3 396.7 L830.1 396.1 L830.9 397.9 L831.7 398.7 L832.5 399.8 L833.3 399.8 L834.1 399.5 L835.0 399.0 L835.8 400.4 L836.6 402.4 L837.4 401.3 L838.2 401.8 L839.0 401.8 L839.8 400.8 L840.6 402.1 L841.4 402.4 L842.2 402.4 L843.0 402.2 L843.8 401.9 L844.6 403.4 L845.4 402.1 L846.2 403.6 L847.0 405.5 L847.8 404.3 L848.6 402.5 L849.4 399.7 L850.2 398.0 L851.1 398.2 L851.9 398.4 L852.7 401.0 L853.5 401.5 L854.3 404.1 L855.1 402.3 L855.9 400.3 L856.7 397.2 L857.5 396.1 L858.3 395.1 L859.1 392.7 L859.9 391.4 L860.7 394.2 L861.5 393.8 L862.3 395.7 L863.1 397.3 L863.9 400.9 L864.7 403.3 L865.5 403.0 L866.3 403.4 L867.2 401.7 L868.0 400.9 L868.8 397.6 L869.6 396.3 L870.4 397.4 L871.2 396.1 L872.0 397.9 L872.8 399.5 L873.6 401.2 L874.4 401.6 L875.2 402.8 L876.0 402.4 L876.8 402.0 L877.6 402.4 L878.4 404.7 L879.2 406.0 L880.0 406.7 L880.8 407.9 L881.6 410.2 L882.4 411.9 L883.3 411.8 L884.1 411.0 L884.9 409.0 L885.7 408.0 L886.5 407.5 L887.3 407.7 L888.1 404.6 L888.9 402.8 L889.7 404.1 L890.5 405.0 L891.3 404.8 L892.1 405.6 L892.9 403.6 L893.7 402.7 L894.5 403.9 L895.3 403.2 L896.1 404.2 L896.9 404.1 L897.7 405.5 L898.5 404.7 L899.4 405.7 L900.2 409.6 L901.0 412.5 L901.8 415.6 L902.6 416.8 L903.4 414.8 L904.2 415.0 L905.0 414.9 L905.8 416.3 L906.6 418.8 L907.4 420.6 L908.2 419.3 L909.0 416.1 L909.8 416.6 L910.6 415.6 L911.4 415.0 L912.2 416.0 L913.0 415.5 L913.8 418.0 L914.6 419.7 L915.5 419.3 L916.3 418.0 L917.1 417.9 L917.9 417.8 L918.7 417.3 L919.5 416.4 L920.3 418.6 L921.1 420.2 L921.9 422.5 L922.7 424.6 L923.5 426.2 L924.3 424.5 L925.1 421.4 L925.9 420.6 L926.7 420.8 L927.5 421.9 L928.3 423.5 L929.1 424.8 L929.9 427.1 L930.7 422.7 L931.6 418.5 L932.4 419.8 L933.2 420.3 L934.0 422.8 L934.8 424.0 L935.6 422.9 L936.4 421.3 L937.2 420.3 L938.0 421.3 L938.8 420.6 L939.6 420.0 L940.4 424.7 L941.2 427.3 L942.0 428.2 L942.8 423.3 L943.6 417.9 L944.4 418.2 L945.2 418.3 L946.0 418.9 L946.8 421.1 L947.7 420.7 L948.5 420.3 L949.3 418.5 L950.1 418.4 L950.9 419.4 L951.7 419.5 L952.5 416.6 L953.3 415.6 L954.1 416.3 L954.9 417.0 L955.7 415.9 L956.5 416.6 L957.3 417.5 L958.1 418.2 L958.9 418.4 L959.7 416.2 L960.5 416.8 L961.3 414.8 L962.1 413.6 L962.9 410.0 L963.8 413.1 L964.6 414.1 L965.4 414.0 L966.2 412.1 L967.0 411.4 L967.8 409.0 L968.6 409.7"/>
</svg>
<div id="tb">
<!-- app icon -->
<svg style="left:8px;top:5.5px" width="12" height="12" viewBox="0 0 12 12"><path d="M.6 .3V10.9H11" stroke="#9a9a9a" stroke-width="1.1" fill="none"/><rect x="2" y="5.4" width="2.1" height="4.6" rx=".8" fill="#f01420"/><rect x="3.9" y="3.2" width="1.7" height="5.2" rx=".7" fill="#1a5af0"/><rect x="5.5" y="1.3" width="2.2" height="5" rx=".9" fill="#f01420"/><rect x="7.6" y="2.4" width="1.6" height="4.8" rx=".7" fill="#1a5af0"/><rect x="9" y="2.8" width="1.4" height="4.5" rx=".6" fill="#f01420"/></svg>
<div class="tt" id="t1" style="left:24px;top:4.6px;transform:scaleX(.856)"><b class="k" style="width:10.4px">金</b>1<b class="k" style="width:10.4px">分</b><b class="k" style="width:10.4px">足</b>[2023/10]1.00</div>
<div class="tt" id="t0" style="left:114.3px;top:4.6px;transform:scaleX(1.25)">-</div>
<div class="tt" id="t2" style="left:123px;top:4.6px;transform:scaleX(.868)"><b class="k" style="width:10.4px">白</b><b class="k" style="width:10.4px">金</b>1<b class="k" style="width:10.4px">分</b><b class="k" style="width:10.4px">足</b>[2023/10]1.00</div>
<!-- window buttons -->
<svg style="left:955px;top:4px" width="66" height="16" viewBox="0 0 66 16">
<defs><linearGradient id="bg" x1="0" y1="0" x2="0" y2="1"><stop offset="0" stop-color="#fbfbfb"/><stop offset=".5" stop-color="#ebebeb"/><stop offset="1" stop-color="#d9d9d9"/></linearGradient></defs>
<rect x="1.8" y="2.6" width="7.6" height="8.6" rx="1" fill="#e9e9e9" stroke="#a2a2a2"/><rect x="5" y="5.4" width="7.4" height="6" rx="1.2" fill="#e4e4e4" stroke="#8e8e8e" stroke-width="1.2"/>
<rect x="19" y=".6" width="13" height="13.8" rx="2.2" fill="url(#bg)" stroke="#b4b4b4"/>
<rect x="34.8" y=".6" width="13" height="13.8" rx="2.2" fill="url(#bg)" stroke="#b4b4b4"/>
<rect x="50.4" y=".6" width="13" height="13.8" rx="2.2" fill="url(#bg)" stroke="#b4b4b4"/>
<rect x="22.7" y="9" width="4.7" height="1.9" fill="#6a6a6a"/>
<rect x="38.7" y="5" width="5.8" height="5.3" fill="none" stroke="#707070" stroke-width="1.1"/><rect x="38.2" y="4.2" width="6.8" height="1.6" fill="#707070"/>
<path d="M54.4 4.4L60 10.6M60 4.4L54.4 10.6" stroke="#6a6a6a" stroke-width="1.4"/>
</svg>
<!-- toolbar text -->
<span class="tc" style="left:8.6px;top:25px;width:9.6px">金</span>
<span class="tn" style="left:27.3px;top:25.1px">2023/10</span>
<div class="spin" style="left:64px;top:22.5px;width:37.5px"><i>1.00</i><s></s></div>
<div class="sep" style="left:105.5px"></div>
<span class="tc" style="left:112.2px;top:25px;width:18.6px">白金</span>
<span class="tn" style="left:139.3px;top:25.1px">2023/10</span>
<div class="spin" style="left:176.8px;top:22.5px;width:37.5px"><i>1.00</i><s></s></div>
<div class="sep" style="left:217.5px"></div>
<span class="tc" style="left:224.4px;top:25px;width:18px">分足</span>
<div class="dd" style="left:247.4px;top:28px"></div>
<div class="spin" style="left:255px;top:22.5px;width:35.8px"><i>1200</i><s></s></div>
<span class="tn" style="left:296.2px;top:25.3px;font-size:9.4px">1</span><span class="tc" style="left:300.6px;top:25px;width:18px">分足</span>
<div class="dd" style="left:323.6px;top:28px"></div>
<div class="sep" style="left:333.5px"></div>
<!-- pressed crosshair button -->
<div style="left:336.2px;top:22px;width:13.6px;height:13.4px;background:#e2e5ec;box-shadow:inset 1px 1px 0 #7c7f88,inset -1px -1px 0 #f4f5f8"></div>
<svg style="left:336px;top:22px" width="14" height="14" viewBox="0 0 14 14"><path d="M4.5 1V13M1 4.6H13" stroke="#6670e2" stroke-width="1" fill="none"/><path d="M6.6 6.6H10L8.9 7.7L11.6 10.4L10.4 11.6L7.7 8.9L6.6 10Z" fill="#a020b8"/></svg>
<div class="sep" style="left:356.4px"></div>
<!-- selected cursor button -->
<div style="left:359.4px;top:22px;width:13.3px;height:13.4px;background:#b9bdc5;box-shadow:inset 1px 1px 0 #80838b,inset -1px -1px 0 #eceef2"></div>
<svg style="left:359px;top:22px" width="14" height="14" viewBox="0 0 14 14"><path d="M2.8 2.6L10.6 5.6L7.9 7.2L11 10.6L9.6 11.8L6.6 8.5L5 11Z" fill="#f4f0ff" stroke="#6a4fd0" stroke-width="1.3" stroke-linejoin="round"/></svg>
<!-- hand -->
<svg style="left:377px;top:22.5px" width="13" height="13" viewBox="0 0 13 13"><path d="M3.2 11.6C2.6 9.8 1.4 8.6 1 7.2C1.6 6.4 2.6 6.8 3.2 7.8V3.2C3.2 2.2 4.6 2.2 4.6 3.2V2C4.6 1 6.1 1 6.1 2V2.3C6.1 1.3 7.6 1.3 7.6 2.3V3.3C7.6 2.4 9 2.4 9 3.4V5.6C9.8 4.8 10.9 5.2 10.6 6.2C10.2 8 9.4 9.6 8.8 11.6Z" fill="#fffaf0" stroke="#e2a042" stroke-width="1.15" stroke-linejoin="round"/><path d="M4.6 3.4V6.2M6.1 2.6V6.2M7.6 3.4V6.2" stroke="#e8b060" stroke-width=".7" fill="none"/></svg>
<!-- pencil -->
<svg style="left:395.5px;top:22.5px" width="13" height="13" viewBox="0 0 13 13"><path d="M9.4 1.2L11.8 3.6L4.6 10.8L1.4 11.8L2.2 8.4Z" fill="#f8c878" stroke="#e09a30" stroke-width="1.1" stroke-linejoin="round"/><path d="M1.4 11.8L2 9.6L3.6 11.2Z" fill="#9a6a20"/></svg>
<!-- marker -->
<svg style="left:413.5px;top:22.5px" width="13" height="13" viewBox="0 0 13 13"><path d="M9.2 1L11.4 3.2L4.4 10.2L1 11.6L2.4 8.2Z" fill="#9cc4ff" stroke="#3f7fe6" stroke-width="1.2" stroke-linejoin="round"/><path d="M9.6 7.6L11.8 9.8L9.6 12L7.4 9.8Z" fill="#1f3f9a"/></svg>
<div class="sep" style="left:433.8px"></div>
<!-- bars -->
<svg style="left:438px;top:23.4px" width="12" height="11" viewBox="0 0 12 11"><rect width="11.2" height="10.8" fill="#e3e6ec" stroke="#c2c6ce" stroke-width=".6"/><path d="M2 10.4V6M4.2 10.4V1.8M6.4 10.4V3.4M8.6 10.4V5.6" stroke="#2f86f4" stroke-width="1.6"/></svg>
<div class="dd" style="left:450.8px;top:28px"></div>
<svg style="left:460px;top:23.4px" width="12" height="11" viewBox="0 0 12 11"><rect width="11.2" height="10.8" fill="#e3e6ec" stroke="#c2c6ce" stroke-width=".6"/><path d="M2 10.4V6M4.2 10.4V1.8M6.4 10.4V3.4M8.6 10.4V5.6" stroke="#2f86f4" stroke-width="1.6"/><path d="M1.4 2.2L9.8 9.4M9.8 2.2L1.4 9.4" stroke="#f03040" stroke-width="1.3"/></svg>
<div class="sep" style="left:479px"></div>
<!-- refresh R -->
<svg style="left:482px;top:22.4px" width="13" height="13" viewBox="0 0 13 13"><path d="M6.2 2.4A4.4 4.4 0 1 0 9.6 10.2" fill="none" stroke="#2b95e8" stroke-width="2"/><path d="M3.2 2.6L7 .4V4.8Z" fill="#2b6fe0"/><text x="6.4" y="9" font-family="Liberation Sans" font-weight="bold" font-size="7" fill="#2368c8">R</text></svg>
<!-- wrench -->
<svg style="left:1000.5px;top:22.6px" width="13" height="13" viewBox="0 0 13 13"><path d="M1.4 11.4L6.4 6.4" stroke="#5454f2" stroke-width="2" stroke-linecap="round"/><path d="M10.8 3.2A3 3 0 1 1 7.6 1.2L8.2 3.6L9.8 4.2Z" fill="#eef" stroke="#6464f2" stroke-width="1.3" stroke-linejoin="round"/></svg>
</div>

</body></html>
